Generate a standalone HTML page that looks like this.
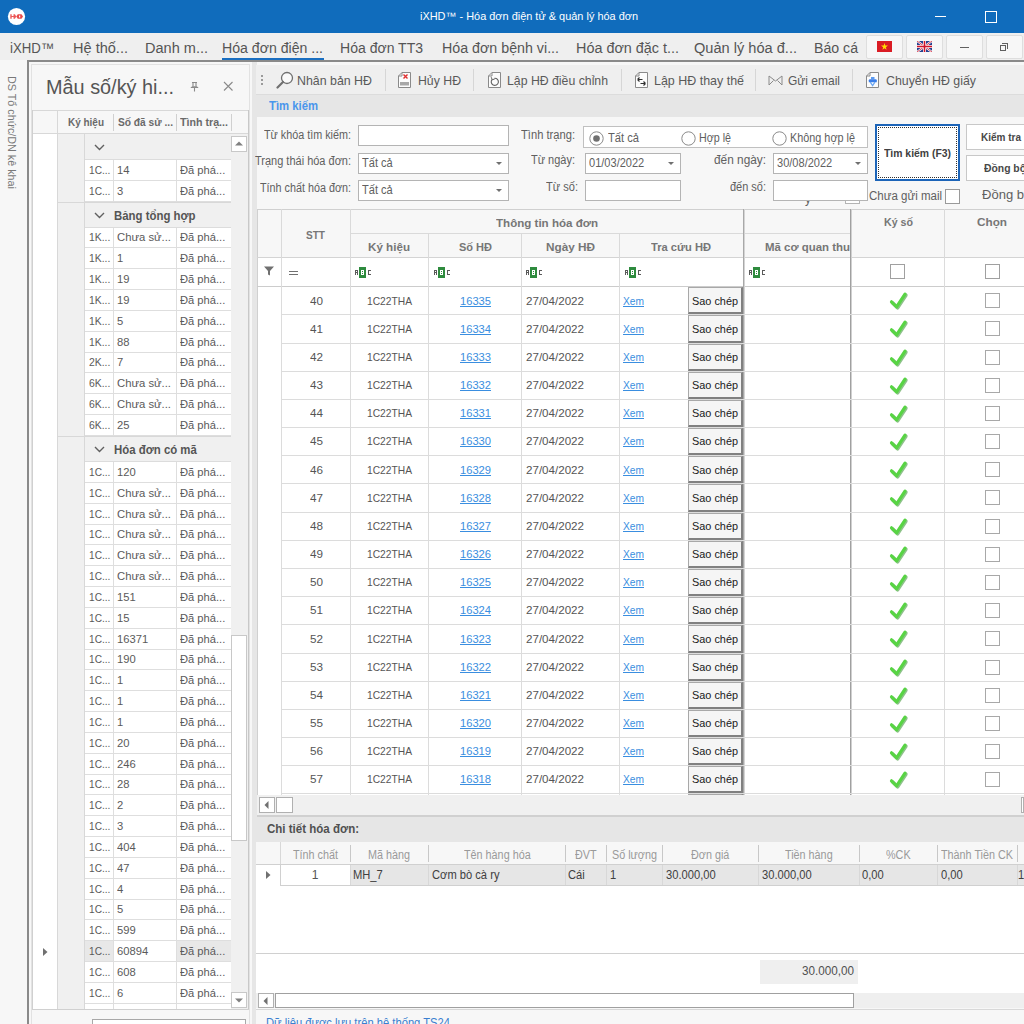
<!DOCTYPE html><html><head><meta charset="utf-8"><style>html,body{margin:0;padding:0;width:1024px;height:1024px;overflow:hidden;background:#f7f7f7;font-family:"Liberation Sans",sans-serif;}.a{position:absolute;}.t{white-space:nowrap;}</style></head><body><div class="a" style="left:0px;top:0px;width:1024px;height:33px;background:#106cbc;"></div><svg class="a" style="left:7px;top:7px" width="19" height="19"><circle cx="9.5" cy="9.5" r="8.6" fill="#fff"/><path d="M3.3,7.3H4.7V9H6.5V7.3H7.9L9.3,9.5L7.9,11.7H6.5V10H4.7V11.7H3.3Z" fill="#ec5a5a"/><path d="M9.2,9.5L10.8,7.2H14.5L16,9.5L14.5,11.8H10.8Z" fill="#ea4a4a"/><path d="M12,8.4H13.2V10.6H12Z" fill="#fff"/></svg><div class="a t" style="left:420.00px;top:10.04px;font-size:11px;line-height:12.29px;color:#ffffff;transform:scaleX(0.9942);transform-origin:0 0;">iXHD™ - Hóa đơn điện tử &amp; quản lý hóa đơn</div><div class="a" style="left:935px;top:15.5px;width:11px;height:1.5px;background:#ffffff;"></div><div class="a" style="left:985px;top:11px;width:11.5px;height:11.5px;border:1.5px solid #ffffff;box-sizing:border-box;"></div><div class="a" style="left:0px;top:33px;width:1024px;height:27px;background:#efefef;"></div><div class="a t" style="left:10.00px;top:40.53px;font-size:14px;line-height:15.64px;color:#555555;transform:scaleX(0.9428);transform-origin:0 0;">iXHD™</div><div class="a t" style="left:73.00px;top:40.53px;font-size:14px;line-height:15.64px;color:#555555;transform:scaleX(1.0394);transform-origin:0 0;">Hệ thố...</div><div class="a t" style="left:145.00px;top:40.53px;font-size:14px;line-height:15.64px;color:#555555;transform:scaleX(1.0381);transform-origin:0 0;">Danh m...</div><div class="a t" style="left:222.00px;top:40.53px;font-size:14px;line-height:15.64px;color:#555555;transform:scaleX(1.0076);transform-origin:0 0;">Hóa đơn điện ...</div><div class="a t" style="left:340.00px;top:40.53px;font-size:14px;line-height:15.64px;color:#555555;transform:scaleX(1.0019);transform-origin:0 0;">Hóa đơn TT3</div><div class="a t" style="left:442.00px;top:40.53px;font-size:14px;line-height:15.64px;color:#555555;transform:scaleX(1.0172);transform-origin:0 0;">Hóa đơn bệnh vi...</div><div class="a t" style="left:576.00px;top:40.53px;font-size:14px;line-height:15.64px;color:#555555;transform:scaleX(1.0276);transform-origin:0 0;">Hóa đơn đặc t...</div><div class="a t" style="left:694.00px;top:40.53px;font-size:14px;line-height:15.64px;color:#555555;transform:scaleX(1.0422);transform-origin:0 0;">Quản lý hóa đ...</div><div class="a t" style="left:814.00px;top:40.53px;font-size:14px;line-height:15.64px;color:#555555;transform:scaleX(1.0096);transform-origin:0 0;">Báo cá</div><div class="a" style="left:222px;top:57.6px;width:102px;height:2.6px;background:#1a6ec0;"></div><div class="a" style="left:866px;top:35px;width:37px;height:24px;background:#f7f7f7;border:1px solid #dedede;box-sizing:border-box;border-radius:2px;"></div><div class="a" style="left:906px;top:35px;width:37px;height:24px;background:#f7f7f7;border:1px solid #dedede;box-sizing:border-box;border-radius:2px;"></div><div class="a" style="left:946px;top:35px;width:37px;height:24px;background:#f7f7f7;border:1px solid #dedede;box-sizing:border-box;border-radius:2px;"></div><div class="a" style="left:986px;top:35px;width:37px;height:24px;background:#f7f7f7;border:1px solid #dedede;box-sizing:border-box;border-radius:2px;"></div><svg class="a" style="left:877px;top:41px" width="15" height="11"><rect width="15" height="11" fill="#da1c24"/><polygon points="7.5,2 8.3,4.6 11,4.6 8.8,6.2 9.6,8.8 7.5,7.2 5.4,8.8 6.2,6.2 4,4.6 6.7,4.6" fill="#ffdd00"/></svg><svg class="a" style="left:917px;top:41px" width="15" height="11"><rect width="15" height="11" fill="#25408f"/><path d="M0,0L15,11M15,0L0,11" stroke="#fff" stroke-width="2.2"/><path d="M0,0L15,11M15,0L0,11" stroke="#cf142b" stroke-width="0.8"/><rect x="6" y="0" width="3" height="11" fill="#fff"/><rect x="0" y="4" width="15" height="3" fill="#fff"/><rect x="6.7" y="0" width="1.6" height="11" fill="#cf142b"/><rect x="0" y="4.7" width="15" height="1.6" fill="#cf142b"/></svg><div class="a" style="left:960px;top:47px;width:9px;height:1px;background:#606060;"></div><div class="a" style="left:1000px;top:45px;width:6px;height:6px;border:1px solid #606060;box-sizing:border-box;"></div><div class="a" style="left:1002px;top:43px;width:6px;height:6px;border:1px solid #606060;box-sizing:border-box;border-left:none;border-bottom:none;"></div><div class="a" style="left:27px;top:60px;width:997px;height:2px;background:#8a8a8a;"></div><div class="a" style="left:0px;top:60px;width:27px;height:964px;background:#f7f7f7;"></div><div class="a t" style="left:9px;top:76px;font-size:11px;line-height:12px;color:#787878;transform-origin:0 0;transform:rotate(90deg) scaleX(0.9795);"><span style="position:relative;top:-9px">DS Tổ chức/DN kê khai</span></div><div class="a" style="left:27px;top:62px;width:2px;height:962px;background:#8a8a8a;"></div><div class="a" style="left:29px;top:62px;width:223px;height:962px;background:#f7f7f7;"></div><div class="a" style="left:31px;top:64px;width:219px;height:960px;border:1px solid #e2e2e2;box-sizing:border-box;"></div><div class="a t" style="left:46.00px;top:76.40px;font-size:20px;line-height:22.34px;color:#555555;transform:scaleX(0.9928);transform-origin:0 0;">Mẫu số/ký hi...</div><svg class="a" style="left:189px;top:81px" width="11" height="11"><path d="M3,1.5H8M4,1.5V5.5M7,1.5V5.5M1.8,6.5H9.2M5.5,6.5V10.5" stroke="#8a8a8a" stroke-width="1.1" fill="none"/><path d="M3.2,5.2L1.8,6.5H9.2L7.8,5.2Z" fill="#8a8a8a"/></svg><svg class="a" style="left:223px;top:81px" width="11" height="11"><path d="M1,1L9.5,9.5M9.5,1L1,9.5" stroke="#8a8a8a" stroke-width="1.1"/></svg><div class="a" style="left:32px;top:110px;width:217px;height:900px;background:#ffffff;"></div><div class="a" style="left:32px;top:110px;width:217px;height:24px;background:#f7f7f7;"></div><div class="a" style="left:32px;top:110px;width:217px;height:1px;background:#d8d8d8;"></div><div class="a" style="left:32px;top:133px;width:217px;height:1px;background:#d8d8d8;"></div><div class="a" style="left:32px;top:110px;width:1px;height:900px;background:#d0d0d0;"></div><div class="a" style="left:248px;top:110px;width:1px;height:900px;background:#c8c8c8;"></div><div class="a" style="left:57px;top:110px;width:1px;height:24px;background:#d8d8d8;"></div><div class="a" style="left:113px;top:114px;width:1px;height:17px;background:#d0d0d0;"></div><div class="a" style="left:176px;top:114px;width:1px;height:17px;background:#d0d0d0;"></div><div class="a" style="left:231px;top:114px;width:1px;height:17px;background:#d0d0d0;"></div><div class="a t" style="left:68.00px;top:116.05px;font-size:11px;line-height:12.29px;color:#6a6a6a;font-weight:bold;transform:scaleX(0.9062);transform-origin:0 0;">Ký hiệu</div><div class="a t" style="left:118.00px;top:116.05px;font-size:11px;line-height:12.29px;color:#6a6a6a;font-weight:bold;transform:scaleX(0.9273);transform-origin:0 0;">Số đã sử ...</div><div class="a t" style="left:180.00px;top:116.05px;font-size:11px;line-height:12.29px;color:#6a6a6a;font-weight:bold;transform:scaleX(0.9698);transform-origin:0 0;">Tình trạ...</div><div class="a" style="left:231px;top:134px;width:17px;height:875px;background:#f0f0f0;"></div><div class="a" style="left:231px;top:136px;width:16px;height:16px;background:#ffffff;border:1px solid #c8c8c8;box-sizing:border-box;"></div><svg class="a" style="left:235px;top:141px" width="8" height="5"><path d="M0,4.5L4,0.5L8,4.5Z" fill="#808080"/></svg><div class="a" style="left:231px;top:635px;width:16px;height:206px;background:#ffffff;border:1px solid #c8c8c8;box-sizing:border-box;"></div><div class="a" style="left:231px;top:992px;width:16px;height:16px;background:#ffffff;border:1px solid #c8c8c8;box-sizing:border-box;"></div><svg class="a" style="left:235px;top:998px" width="8" height="5"><path d="M0,0.5L4,4.5L8,0.5Z" fill="#808080"/></svg><div class="a" style="left:57px;top:134px;width:27px;height:875px;background:#f0f0f0;"></div><div class="a" style="left:57px;top:134px;width:174px;height:26px;background:#f0f0f0;"></div><div class="a" style="left:84px;top:159px;width:147px;height:1px;background:#dcdcdc;"></div><svg class="a" style="left:94px;top:144px" width="11" height="7"><path d="M1,1L5.5,5.5L10,1" stroke="#606060" stroke-width="1.4" fill="none"/></svg><div class="a" style="left:84px;top:160px;width:147px;height:21px;background:#ffffff;"></div><div class="a" style="left:84px;top:180px;width:147px;height:1px;background:#dedede;"></div><div class="a" style="left:113px;top:160px;width:1px;height:21px;background:#dedede;"></div><div class="a" style="left:176px;top:160px;width:1px;height:21px;background:#dedede;"></div><div class="a t" style="left:89.00px;top:163.76px;font-size:11px;line-height:12.29px;color:#5a5a5a;transform:scaleX(0.9213);transform-origin:0 0;">1C...</div><div class="a t" style="left:117.00px;top:163.76px;font-size:11px;line-height:12.29px;color:#5a5a5a;transform:scaleX(1.0200);transform-origin:0 0;">14</div><div class="a t" style="left:180.00px;top:163.76px;font-size:11px;line-height:12.29px;color:#5a5a5a;transform:scaleX(1.0149);transform-origin:0 0;">Đã phá...</div><div class="a" style="left:84px;top:181px;width:147px;height:21px;background:#ffffff;"></div><div class="a" style="left:84px;top:201px;width:147px;height:1px;background:#dedede;"></div><div class="a" style="left:113px;top:181px;width:1px;height:21px;background:#dedede;"></div><div class="a" style="left:176px;top:181px;width:1px;height:21px;background:#dedede;"></div><div class="a t" style="left:89.00px;top:184.59px;font-size:11px;line-height:12.29px;color:#5a5a5a;transform:scaleX(0.9213);transform-origin:0 0;">1C...</div><div class="a t" style="left:117.00px;top:184.59px;font-size:11px;line-height:12.29px;color:#5a5a5a;transform:scaleX(1.0200);transform-origin:0 0;">3</div><div class="a t" style="left:180.00px;top:184.59px;font-size:11px;line-height:12.29px;color:#5a5a5a;transform:scaleX(1.0149);transform-origin:0 0;">Đã phá...</div><div class="a" style="left:57px;top:202px;width:174px;height:26px;background:#f0f0f0;"></div><div class="a" style="left:57px;top:202px;width:174px;height:1px;background:#d8d8d8;"></div><div class="a" style="left:84px;top:227px;width:147px;height:1px;background:#dcdcdc;"></div><svg class="a" style="left:94px;top:212px" width="11" height="7"><path d="M1,1L5.5,5.5L10,1" stroke="#606060" stroke-width="1.4" fill="none"/></svg><div class="a t" style="left:114.00px;top:210.10px;font-size:12px;line-height:13.40px;color:#555555;font-weight:bold;transform:scaleX(0.9500);transform-origin:0 0;">Bảng tổng hợp</div><div class="a" style="left:84px;top:228px;width:147px;height:20px;background:#ffffff;"></div><div class="a" style="left:84px;top:247px;width:147px;height:1px;background:#dedede;"></div><div class="a" style="left:113px;top:228px;width:1px;height:20px;background:#dedede;"></div><div class="a" style="left:176px;top:228px;width:1px;height:20px;background:#dedede;"></div><div class="a t" style="left:89.00px;top:231.42px;font-size:11px;line-height:12.29px;color:#5a5a5a;transform:scaleX(0.9460);transform-origin:0 0;">1K...</div><div class="a t" style="left:117.00px;top:231.42px;font-size:11px;line-height:12.29px;color:#5a5a5a;transform:scaleX(1.0261);transform-origin:0 0;">Chưa sử...</div><div class="a t" style="left:180.00px;top:231.42px;font-size:11px;line-height:12.29px;color:#5a5a5a;transform:scaleX(1.0149);transform-origin:0 0;">Đã phá...</div><div class="a" style="left:84px;top:248px;width:147px;height:21px;background:#ffffff;"></div><div class="a" style="left:84px;top:268px;width:147px;height:1px;background:#dedede;"></div><div class="a" style="left:113px;top:248px;width:1px;height:21px;background:#dedede;"></div><div class="a" style="left:176px;top:248px;width:1px;height:21px;background:#dedede;"></div><div class="a t" style="left:89.00px;top:252.25px;font-size:11px;line-height:12.29px;color:#5a5a5a;transform:scaleX(0.9460);transform-origin:0 0;">1K...</div><div class="a t" style="left:117.00px;top:252.25px;font-size:11px;line-height:12.29px;color:#5a5a5a;transform:scaleX(1.0200);transform-origin:0 0;">1</div><div class="a t" style="left:180.00px;top:252.25px;font-size:11px;line-height:12.29px;color:#5a5a5a;transform:scaleX(1.0149);transform-origin:0 0;">Đã phá...</div><div class="a" style="left:84px;top:269px;width:147px;height:21px;background:#ffffff;"></div><div class="a" style="left:84px;top:289px;width:147px;height:1px;background:#dedede;"></div><div class="a" style="left:113px;top:269px;width:1px;height:21px;background:#dedede;"></div><div class="a" style="left:176px;top:269px;width:1px;height:21px;background:#dedede;"></div><div class="a t" style="left:89.00px;top:273.08px;font-size:11px;line-height:12.29px;color:#5a5a5a;transform:scaleX(0.9460);transform-origin:0 0;">1K...</div><div class="a t" style="left:117.00px;top:273.08px;font-size:11px;line-height:12.29px;color:#5a5a5a;transform:scaleX(1.0200);transform-origin:0 0;">19</div><div class="a t" style="left:180.00px;top:273.08px;font-size:11px;line-height:12.29px;color:#5a5a5a;transform:scaleX(1.0149);transform-origin:0 0;">Đã phá...</div><div class="a" style="left:84px;top:290px;width:147px;height:21px;background:#ffffff;"></div><div class="a" style="left:84px;top:310px;width:147px;height:1px;background:#dedede;"></div><div class="a" style="left:113px;top:290px;width:1px;height:21px;background:#dedede;"></div><div class="a" style="left:176px;top:290px;width:1px;height:21px;background:#dedede;"></div><div class="a t" style="left:89.00px;top:293.91px;font-size:11px;line-height:12.29px;color:#5a5a5a;transform:scaleX(0.9460);transform-origin:0 0;">1K...</div><div class="a t" style="left:117.00px;top:293.91px;font-size:11px;line-height:12.29px;color:#5a5a5a;transform:scaleX(1.0200);transform-origin:0 0;">19</div><div class="a t" style="left:180.00px;top:293.91px;font-size:11px;line-height:12.29px;color:#5a5a5a;transform:scaleX(1.0149);transform-origin:0 0;">Đã phá...</div><div class="a" style="left:84px;top:311px;width:147px;height:21px;background:#ffffff;"></div><div class="a" style="left:84px;top:331px;width:147px;height:1px;background:#dedede;"></div><div class="a" style="left:113px;top:311px;width:1px;height:21px;background:#dedede;"></div><div class="a" style="left:176px;top:311px;width:1px;height:21px;background:#dedede;"></div><div class="a t" style="left:89.00px;top:314.74px;font-size:11px;line-height:12.29px;color:#5a5a5a;transform:scaleX(0.9460);transform-origin:0 0;">1K...</div><div class="a t" style="left:117.00px;top:314.74px;font-size:11px;line-height:12.29px;color:#5a5a5a;transform:scaleX(1.0200);transform-origin:0 0;">5</div><div class="a t" style="left:180.00px;top:314.74px;font-size:11px;line-height:12.29px;color:#5a5a5a;transform:scaleX(1.0149);transform-origin:0 0;">Đã phá...</div><div class="a" style="left:84px;top:332px;width:147px;height:21px;background:#ffffff;"></div><div class="a" style="left:84px;top:352px;width:147px;height:1px;background:#dedede;"></div><div class="a" style="left:113px;top:332px;width:1px;height:21px;background:#dedede;"></div><div class="a" style="left:176px;top:332px;width:1px;height:21px;background:#dedede;"></div><div class="a t" style="left:89.00px;top:335.57px;font-size:11px;line-height:12.29px;color:#5a5a5a;transform:scaleX(0.9460);transform-origin:0 0;">1K...</div><div class="a t" style="left:117.00px;top:335.57px;font-size:11px;line-height:12.29px;color:#5a5a5a;transform:scaleX(1.0200);transform-origin:0 0;">88</div><div class="a t" style="left:180.00px;top:335.57px;font-size:11px;line-height:12.29px;color:#5a5a5a;transform:scaleX(1.0149);transform-origin:0 0;">Đã phá...</div><div class="a" style="left:84px;top:353px;width:147px;height:20px;background:#ffffff;"></div><div class="a" style="left:84px;top:372px;width:147px;height:1px;background:#dedede;"></div><div class="a" style="left:113px;top:353px;width:1px;height:20px;background:#dedede;"></div><div class="a" style="left:176px;top:353px;width:1px;height:20px;background:#dedede;"></div><div class="a t" style="left:89.00px;top:356.40px;font-size:11px;line-height:12.29px;color:#5a5a5a;transform:scaleX(0.9460);transform-origin:0 0;">2K...</div><div class="a t" style="left:117.00px;top:356.40px;font-size:11px;line-height:12.29px;color:#5a5a5a;transform:scaleX(1.0200);transform-origin:0 0;">7</div><div class="a t" style="left:180.00px;top:356.40px;font-size:11px;line-height:12.29px;color:#5a5a5a;transform:scaleX(1.0149);transform-origin:0 0;">Đã phá...</div><div class="a" style="left:84px;top:373px;width:147px;height:21px;background:#ffffff;"></div><div class="a" style="left:84px;top:393px;width:147px;height:1px;background:#dedede;"></div><div class="a" style="left:113px;top:373px;width:1px;height:21px;background:#dedede;"></div><div class="a" style="left:176px;top:373px;width:1px;height:21px;background:#dedede;"></div><div class="a t" style="left:89.00px;top:377.23px;font-size:11px;line-height:12.29px;color:#5a5a5a;transform:scaleX(0.9460);transform-origin:0 0;">6K...</div><div class="a t" style="left:117.00px;top:377.23px;font-size:11px;line-height:12.29px;color:#5a5a5a;transform:scaleX(1.0261);transform-origin:0 0;">Chưa sử...</div><div class="a t" style="left:180.00px;top:377.23px;font-size:11px;line-height:12.29px;color:#5a5a5a;transform:scaleX(1.0149);transform-origin:0 0;">Đã phá...</div><div class="a" style="left:84px;top:394px;width:147px;height:21px;background:#ffffff;"></div><div class="a" style="left:84px;top:414px;width:147px;height:1px;background:#dedede;"></div><div class="a" style="left:113px;top:394px;width:1px;height:21px;background:#dedede;"></div><div class="a" style="left:176px;top:394px;width:1px;height:21px;background:#dedede;"></div><div class="a t" style="left:89.00px;top:398.06px;font-size:11px;line-height:12.29px;color:#5a5a5a;transform:scaleX(0.9460);transform-origin:0 0;">6K...</div><div class="a t" style="left:117.00px;top:398.06px;font-size:11px;line-height:12.29px;color:#5a5a5a;transform:scaleX(1.0261);transform-origin:0 0;">Chưa sử...</div><div class="a t" style="left:180.00px;top:398.06px;font-size:11px;line-height:12.29px;color:#5a5a5a;transform:scaleX(1.0149);transform-origin:0 0;">Đã phá...</div><div class="a" style="left:84px;top:415px;width:147px;height:21px;background:#ffffff;"></div><div class="a" style="left:84px;top:435px;width:147px;height:1px;background:#dedede;"></div><div class="a" style="left:113px;top:415px;width:1px;height:21px;background:#dedede;"></div><div class="a" style="left:176px;top:415px;width:1px;height:21px;background:#dedede;"></div><div class="a t" style="left:89.00px;top:418.89px;font-size:11px;line-height:12.29px;color:#5a5a5a;transform:scaleX(0.9460);transform-origin:0 0;">6K...</div><div class="a t" style="left:117.00px;top:418.89px;font-size:11px;line-height:12.29px;color:#5a5a5a;transform:scaleX(1.0200);transform-origin:0 0;">25</div><div class="a t" style="left:180.00px;top:418.89px;font-size:11px;line-height:12.29px;color:#5a5a5a;transform:scaleX(1.0149);transform-origin:0 0;">Đã phá...</div><div class="a" style="left:57px;top:436px;width:174px;height:26px;background:#f0f0f0;"></div><div class="a" style="left:57px;top:436px;width:174px;height:1px;background:#d8d8d8;"></div><div class="a" style="left:84px;top:461px;width:147px;height:1px;background:#dcdcdc;"></div><svg class="a" style="left:94px;top:446px" width="11" height="7"><path d="M1,1L5.5,5.5L10,1" stroke="#606060" stroke-width="1.4" fill="none"/></svg><div class="a t" style="left:114.00px;top:444.40px;font-size:12px;line-height:13.40px;color:#555555;font-weight:bold;transform:scaleX(0.9500);transform-origin:0 0;">Hóa đơn có mã</div><div class="a" style="left:84px;top:462px;width:147px;height:21px;background:#ffffff;"></div><div class="a" style="left:84px;top:482px;width:147px;height:1px;background:#dedede;"></div><div class="a" style="left:113px;top:462px;width:1px;height:21px;background:#dedede;"></div><div class="a" style="left:176px;top:462px;width:1px;height:21px;background:#dedede;"></div><div class="a t" style="left:89.00px;top:465.92px;font-size:11px;line-height:12.29px;color:#5a5a5a;transform:scaleX(0.9213);transform-origin:0 0;">1C...</div><div class="a t" style="left:117.00px;top:465.92px;font-size:11px;line-height:12.29px;color:#5a5a5a;transform:scaleX(1.0200);transform-origin:0 0;">120</div><div class="a t" style="left:180.00px;top:465.92px;font-size:11px;line-height:12.29px;color:#5a5a5a;transform:scaleX(1.0149);transform-origin:0 0;">Đã phá...</div><div class="a" style="left:84px;top:483px;width:147px;height:21px;background:#ffffff;"></div><div class="a" style="left:84px;top:503px;width:147px;height:1px;background:#dedede;"></div><div class="a" style="left:113px;top:483px;width:1px;height:21px;background:#dedede;"></div><div class="a" style="left:176px;top:483px;width:1px;height:21px;background:#dedede;"></div><div class="a t" style="left:89.00px;top:486.75px;font-size:11px;line-height:12.29px;color:#5a5a5a;transform:scaleX(0.9213);transform-origin:0 0;">1C...</div><div class="a t" style="left:117.00px;top:486.75px;font-size:11px;line-height:12.29px;color:#5a5a5a;transform:scaleX(1.0261);transform-origin:0 0;">Chưa sử...</div><div class="a t" style="left:180.00px;top:486.75px;font-size:11px;line-height:12.29px;color:#5a5a5a;transform:scaleX(1.0149);transform-origin:0 0;">Đã phá...</div><div class="a" style="left:84px;top:504px;width:147px;height:21px;background:#ffffff;"></div><div class="a" style="left:84px;top:524px;width:147px;height:1px;background:#dedede;"></div><div class="a" style="left:113px;top:504px;width:1px;height:21px;background:#dedede;"></div><div class="a" style="left:176px;top:504px;width:1px;height:21px;background:#dedede;"></div><div class="a t" style="left:89.00px;top:507.58px;font-size:11px;line-height:12.29px;color:#5a5a5a;transform:scaleX(0.9213);transform-origin:0 0;">1C...</div><div class="a t" style="left:117.00px;top:507.58px;font-size:11px;line-height:12.29px;color:#5a5a5a;transform:scaleX(1.0261);transform-origin:0 0;">Chưa sử...</div><div class="a t" style="left:180.00px;top:507.58px;font-size:11px;line-height:12.29px;color:#5a5a5a;transform:scaleX(1.0149);transform-origin:0 0;">Đã phá...</div><div class="a" style="left:84px;top:525px;width:147px;height:20px;background:#ffffff;"></div><div class="a" style="left:84px;top:544px;width:147px;height:1px;background:#dedede;"></div><div class="a" style="left:113px;top:525px;width:1px;height:20px;background:#dedede;"></div><div class="a" style="left:176px;top:525px;width:1px;height:20px;background:#dedede;"></div><div class="a t" style="left:89.00px;top:528.41px;font-size:11px;line-height:12.29px;color:#5a5a5a;transform:scaleX(0.9213);transform-origin:0 0;">1C...</div><div class="a t" style="left:117.00px;top:528.41px;font-size:11px;line-height:12.29px;color:#5a5a5a;transform:scaleX(1.0261);transform-origin:0 0;">Chưa sử...</div><div class="a t" style="left:180.00px;top:528.41px;font-size:11px;line-height:12.29px;color:#5a5a5a;transform:scaleX(1.0149);transform-origin:0 0;">Đã phá...</div><div class="a" style="left:84px;top:545px;width:147px;height:21px;background:#ffffff;"></div><div class="a" style="left:84px;top:565px;width:147px;height:1px;background:#dedede;"></div><div class="a" style="left:113px;top:545px;width:1px;height:21px;background:#dedede;"></div><div class="a" style="left:176px;top:545px;width:1px;height:21px;background:#dedede;"></div><div class="a t" style="left:89.00px;top:549.24px;font-size:11px;line-height:12.29px;color:#5a5a5a;transform:scaleX(0.9213);transform-origin:0 0;">1C...</div><div class="a t" style="left:117.00px;top:549.24px;font-size:11px;line-height:12.29px;color:#5a5a5a;transform:scaleX(1.0261);transform-origin:0 0;">Chưa sử...</div><div class="a t" style="left:180.00px;top:549.24px;font-size:11px;line-height:12.29px;color:#5a5a5a;transform:scaleX(1.0149);transform-origin:0 0;">Đã phá...</div><div class="a" style="left:84px;top:566px;width:147px;height:21px;background:#ffffff;"></div><div class="a" style="left:84px;top:586px;width:147px;height:1px;background:#dedede;"></div><div class="a" style="left:113px;top:566px;width:1px;height:21px;background:#dedede;"></div><div class="a" style="left:176px;top:566px;width:1px;height:21px;background:#dedede;"></div><div class="a t" style="left:89.00px;top:570.07px;font-size:11px;line-height:12.29px;color:#5a5a5a;transform:scaleX(0.9213);transform-origin:0 0;">1C...</div><div class="a t" style="left:117.00px;top:570.07px;font-size:11px;line-height:12.29px;color:#5a5a5a;transform:scaleX(1.0261);transform-origin:0 0;">Chưa sử...</div><div class="a t" style="left:180.00px;top:570.07px;font-size:11px;line-height:12.29px;color:#5a5a5a;transform:scaleX(1.0149);transform-origin:0 0;">Đã phá...</div><div class="a" style="left:84px;top:587px;width:147px;height:21px;background:#ffffff;"></div><div class="a" style="left:84px;top:607px;width:147px;height:1px;background:#dedede;"></div><div class="a" style="left:113px;top:587px;width:1px;height:21px;background:#dedede;"></div><div class="a" style="left:176px;top:587px;width:1px;height:21px;background:#dedede;"></div><div class="a t" style="left:89.00px;top:590.90px;font-size:11px;line-height:12.29px;color:#5a5a5a;transform:scaleX(0.9213);transform-origin:0 0;">1C...</div><div class="a t" style="left:117.00px;top:590.90px;font-size:11px;line-height:12.29px;color:#5a5a5a;transform:scaleX(1.0200);transform-origin:0 0;">151</div><div class="a t" style="left:180.00px;top:590.90px;font-size:11px;line-height:12.29px;color:#5a5a5a;transform:scaleX(1.0149);transform-origin:0 0;">Đã phá...</div><div class="a" style="left:84px;top:608px;width:147px;height:21px;background:#ffffff;"></div><div class="a" style="left:84px;top:628px;width:147px;height:1px;background:#dedede;"></div><div class="a" style="left:113px;top:608px;width:1px;height:21px;background:#dedede;"></div><div class="a" style="left:176px;top:608px;width:1px;height:21px;background:#dedede;"></div><div class="a t" style="left:89.00px;top:611.73px;font-size:11px;line-height:12.29px;color:#5a5a5a;transform:scaleX(0.9213);transform-origin:0 0;">1C...</div><div class="a t" style="left:117.00px;top:611.73px;font-size:11px;line-height:12.29px;color:#5a5a5a;transform:scaleX(1.0200);transform-origin:0 0;">15</div><div class="a t" style="left:180.00px;top:611.73px;font-size:11px;line-height:12.29px;color:#5a5a5a;transform:scaleX(1.0149);transform-origin:0 0;">Đã phá...</div><div class="a" style="left:84px;top:629px;width:147px;height:21px;background:#ffffff;"></div><div class="a" style="left:84px;top:649px;width:147px;height:1px;background:#dedede;"></div><div class="a" style="left:113px;top:629px;width:1px;height:21px;background:#dedede;"></div><div class="a" style="left:176px;top:629px;width:1px;height:21px;background:#dedede;"></div><div class="a t" style="left:89.00px;top:632.56px;font-size:11px;line-height:12.29px;color:#5a5a5a;transform:scaleX(0.9213);transform-origin:0 0;">1C...</div><div class="a t" style="left:117.00px;top:632.56px;font-size:11px;line-height:12.29px;color:#5a5a5a;transform:scaleX(1.0200);transform-origin:0 0;">16371</div><div class="a t" style="left:180.00px;top:632.56px;font-size:11px;line-height:12.29px;color:#5a5a5a;transform:scaleX(1.0149);transform-origin:0 0;">Đã phá...</div><div class="a" style="left:84px;top:650px;width:147px;height:20px;background:#ffffff;"></div><div class="a" style="left:84px;top:669px;width:147px;height:1px;background:#dedede;"></div><div class="a" style="left:113px;top:650px;width:1px;height:20px;background:#dedede;"></div><div class="a" style="left:176px;top:650px;width:1px;height:20px;background:#dedede;"></div><div class="a t" style="left:89.00px;top:653.39px;font-size:11px;line-height:12.29px;color:#5a5a5a;transform:scaleX(0.9213);transform-origin:0 0;">1C...</div><div class="a t" style="left:117.00px;top:653.39px;font-size:11px;line-height:12.29px;color:#5a5a5a;transform:scaleX(1.0200);transform-origin:0 0;">190</div><div class="a t" style="left:180.00px;top:653.39px;font-size:11px;line-height:12.29px;color:#5a5a5a;transform:scaleX(1.0149);transform-origin:0 0;">Đã phá...</div><div class="a" style="left:84px;top:670px;width:147px;height:21px;background:#ffffff;"></div><div class="a" style="left:84px;top:690px;width:147px;height:1px;background:#dedede;"></div><div class="a" style="left:113px;top:670px;width:1px;height:21px;background:#dedede;"></div><div class="a" style="left:176px;top:670px;width:1px;height:21px;background:#dedede;"></div><div class="a t" style="left:89.00px;top:674.22px;font-size:11px;line-height:12.29px;color:#5a5a5a;transform:scaleX(0.9213);transform-origin:0 0;">1C...</div><div class="a t" style="left:117.00px;top:674.22px;font-size:11px;line-height:12.29px;color:#5a5a5a;transform:scaleX(1.0200);transform-origin:0 0;">1</div><div class="a t" style="left:180.00px;top:674.22px;font-size:11px;line-height:12.29px;color:#5a5a5a;transform:scaleX(1.0149);transform-origin:0 0;">Đã phá...</div><div class="a" style="left:84px;top:691px;width:147px;height:21px;background:#ffffff;"></div><div class="a" style="left:84px;top:711px;width:147px;height:1px;background:#dedede;"></div><div class="a" style="left:113px;top:691px;width:1px;height:21px;background:#dedede;"></div><div class="a" style="left:176px;top:691px;width:1px;height:21px;background:#dedede;"></div><div class="a t" style="left:89.00px;top:695.05px;font-size:11px;line-height:12.29px;color:#5a5a5a;transform:scaleX(0.9213);transform-origin:0 0;">1C...</div><div class="a t" style="left:117.00px;top:695.05px;font-size:11px;line-height:12.29px;color:#5a5a5a;transform:scaleX(1.0200);transform-origin:0 0;">1</div><div class="a t" style="left:180.00px;top:695.05px;font-size:11px;line-height:12.29px;color:#5a5a5a;transform:scaleX(1.0149);transform-origin:0 0;">Đã phá...</div><div class="a" style="left:84px;top:712px;width:147px;height:21px;background:#ffffff;"></div><div class="a" style="left:84px;top:732px;width:147px;height:1px;background:#dedede;"></div><div class="a" style="left:113px;top:712px;width:1px;height:21px;background:#dedede;"></div><div class="a" style="left:176px;top:712px;width:1px;height:21px;background:#dedede;"></div><div class="a t" style="left:89.00px;top:715.88px;font-size:11px;line-height:12.29px;color:#5a5a5a;transform:scaleX(0.9213);transform-origin:0 0;">1C...</div><div class="a t" style="left:117.00px;top:715.88px;font-size:11px;line-height:12.29px;color:#5a5a5a;transform:scaleX(1.0200);transform-origin:0 0;">1</div><div class="a t" style="left:180.00px;top:715.88px;font-size:11px;line-height:12.29px;color:#5a5a5a;transform:scaleX(1.0149);transform-origin:0 0;">Đã phá...</div><div class="a" style="left:84px;top:733px;width:147px;height:21px;background:#ffffff;"></div><div class="a" style="left:84px;top:753px;width:147px;height:1px;background:#dedede;"></div><div class="a" style="left:113px;top:733px;width:1px;height:21px;background:#dedede;"></div><div class="a" style="left:176px;top:733px;width:1px;height:21px;background:#dedede;"></div><div class="a t" style="left:89.00px;top:736.71px;font-size:11px;line-height:12.29px;color:#5a5a5a;transform:scaleX(0.9213);transform-origin:0 0;">1C...</div><div class="a t" style="left:117.00px;top:736.71px;font-size:11px;line-height:12.29px;color:#5a5a5a;transform:scaleX(1.0200);transform-origin:0 0;">20</div><div class="a t" style="left:180.00px;top:736.71px;font-size:11px;line-height:12.29px;color:#5a5a5a;transform:scaleX(1.0149);transform-origin:0 0;">Đã phá...</div><div class="a" style="left:84px;top:754px;width:147px;height:21px;background:#ffffff;"></div><div class="a" style="left:84px;top:774px;width:147px;height:1px;background:#dedede;"></div><div class="a" style="left:113px;top:754px;width:1px;height:21px;background:#dedede;"></div><div class="a" style="left:176px;top:754px;width:1px;height:21px;background:#dedede;"></div><div class="a t" style="left:89.00px;top:757.54px;font-size:11px;line-height:12.29px;color:#5a5a5a;transform:scaleX(0.9213);transform-origin:0 0;">1C...</div><div class="a t" style="left:117.00px;top:757.54px;font-size:11px;line-height:12.29px;color:#5a5a5a;transform:scaleX(1.0200);transform-origin:0 0;">246</div><div class="a t" style="left:180.00px;top:757.54px;font-size:11px;line-height:12.29px;color:#5a5a5a;transform:scaleX(1.0149);transform-origin:0 0;">Đã phá...</div><div class="a" style="left:84px;top:775px;width:147px;height:20px;background:#ffffff;"></div><div class="a" style="left:84px;top:794px;width:147px;height:1px;background:#dedede;"></div><div class="a" style="left:113px;top:775px;width:1px;height:20px;background:#dedede;"></div><div class="a" style="left:176px;top:775px;width:1px;height:20px;background:#dedede;"></div><div class="a t" style="left:89.00px;top:778.37px;font-size:11px;line-height:12.29px;color:#5a5a5a;transform:scaleX(0.9213);transform-origin:0 0;">1C...</div><div class="a t" style="left:117.00px;top:778.37px;font-size:11px;line-height:12.29px;color:#5a5a5a;transform:scaleX(1.0200);transform-origin:0 0;">28</div><div class="a t" style="left:180.00px;top:778.37px;font-size:11px;line-height:12.29px;color:#5a5a5a;transform:scaleX(1.0149);transform-origin:0 0;">Đã phá...</div><div class="a" style="left:84px;top:795px;width:147px;height:21px;background:#ffffff;"></div><div class="a" style="left:84px;top:815px;width:147px;height:1px;background:#dedede;"></div><div class="a" style="left:113px;top:795px;width:1px;height:21px;background:#dedede;"></div><div class="a" style="left:176px;top:795px;width:1px;height:21px;background:#dedede;"></div><div class="a t" style="left:89.00px;top:799.20px;font-size:11px;line-height:12.29px;color:#5a5a5a;transform:scaleX(0.9213);transform-origin:0 0;">1C...</div><div class="a t" style="left:117.00px;top:799.20px;font-size:11px;line-height:12.29px;color:#5a5a5a;transform:scaleX(1.0200);transform-origin:0 0;">2</div><div class="a t" style="left:180.00px;top:799.20px;font-size:11px;line-height:12.29px;color:#5a5a5a;transform:scaleX(1.0149);transform-origin:0 0;">Đã phá...</div><div class="a" style="left:84px;top:816px;width:147px;height:21px;background:#ffffff;"></div><div class="a" style="left:84px;top:836px;width:147px;height:1px;background:#dedede;"></div><div class="a" style="left:113px;top:816px;width:1px;height:21px;background:#dedede;"></div><div class="a" style="left:176px;top:816px;width:1px;height:21px;background:#dedede;"></div><div class="a t" style="left:89.00px;top:820.03px;font-size:11px;line-height:12.29px;color:#5a5a5a;transform:scaleX(0.9213);transform-origin:0 0;">1C...</div><div class="a t" style="left:117.00px;top:820.03px;font-size:11px;line-height:12.29px;color:#5a5a5a;transform:scaleX(1.0200);transform-origin:0 0;">3</div><div class="a t" style="left:180.00px;top:820.03px;font-size:11px;line-height:12.29px;color:#5a5a5a;transform:scaleX(1.0149);transform-origin:0 0;">Đã phá...</div><div class="a" style="left:84px;top:837px;width:147px;height:21px;background:#ffffff;"></div><div class="a" style="left:84px;top:857px;width:147px;height:1px;background:#dedede;"></div><div class="a" style="left:113px;top:837px;width:1px;height:21px;background:#dedede;"></div><div class="a" style="left:176px;top:837px;width:1px;height:21px;background:#dedede;"></div><div class="a t" style="left:89.00px;top:840.86px;font-size:11px;line-height:12.29px;color:#5a5a5a;transform:scaleX(0.9213);transform-origin:0 0;">1C...</div><div class="a t" style="left:117.00px;top:840.86px;font-size:11px;line-height:12.29px;color:#5a5a5a;transform:scaleX(1.0200);transform-origin:0 0;">404</div><div class="a t" style="left:180.00px;top:840.86px;font-size:11px;line-height:12.29px;color:#5a5a5a;transform:scaleX(1.0149);transform-origin:0 0;">Đã phá...</div><div class="a" style="left:84px;top:858px;width:147px;height:21px;background:#ffffff;"></div><div class="a" style="left:84px;top:878px;width:147px;height:1px;background:#dedede;"></div><div class="a" style="left:113px;top:858px;width:1px;height:21px;background:#dedede;"></div><div class="a" style="left:176px;top:858px;width:1px;height:21px;background:#dedede;"></div><div class="a t" style="left:89.00px;top:861.69px;font-size:11px;line-height:12.29px;color:#5a5a5a;transform:scaleX(0.9213);transform-origin:0 0;">1C...</div><div class="a t" style="left:117.00px;top:861.69px;font-size:11px;line-height:12.29px;color:#5a5a5a;transform:scaleX(1.0200);transform-origin:0 0;">47</div><div class="a t" style="left:180.00px;top:861.69px;font-size:11px;line-height:12.29px;color:#5a5a5a;transform:scaleX(1.0149);transform-origin:0 0;">Đã phá...</div><div class="a" style="left:84px;top:879px;width:147px;height:21px;background:#ffffff;"></div><div class="a" style="left:84px;top:899px;width:147px;height:1px;background:#dedede;"></div><div class="a" style="left:113px;top:879px;width:1px;height:21px;background:#dedede;"></div><div class="a" style="left:176px;top:879px;width:1px;height:21px;background:#dedede;"></div><div class="a t" style="left:89.00px;top:882.52px;font-size:11px;line-height:12.29px;color:#5a5a5a;transform:scaleX(0.9213);transform-origin:0 0;">1C...</div><div class="a t" style="left:117.00px;top:882.52px;font-size:11px;line-height:12.29px;color:#5a5a5a;transform:scaleX(1.0200);transform-origin:0 0;">4</div><div class="a t" style="left:180.00px;top:882.52px;font-size:11px;line-height:12.29px;color:#5a5a5a;transform:scaleX(1.0149);transform-origin:0 0;">Đã phá...</div><div class="a" style="left:84px;top:900px;width:147px;height:20px;background:#ffffff;"></div><div class="a" style="left:84px;top:919px;width:147px;height:1px;background:#dedede;"></div><div class="a" style="left:113px;top:900px;width:1px;height:20px;background:#dedede;"></div><div class="a" style="left:176px;top:900px;width:1px;height:20px;background:#dedede;"></div><div class="a t" style="left:89.00px;top:903.35px;font-size:11px;line-height:12.29px;color:#5a5a5a;transform:scaleX(0.9213);transform-origin:0 0;">1C...</div><div class="a t" style="left:117.00px;top:903.35px;font-size:11px;line-height:12.29px;color:#5a5a5a;transform:scaleX(1.0200);transform-origin:0 0;">5</div><div class="a t" style="left:180.00px;top:903.35px;font-size:11px;line-height:12.29px;color:#5a5a5a;transform:scaleX(1.0149);transform-origin:0 0;">Đã phá...</div><div class="a" style="left:84px;top:920px;width:147px;height:21px;background:#ffffff;"></div><div class="a" style="left:84px;top:940px;width:147px;height:1px;background:#dedede;"></div><div class="a" style="left:113px;top:920px;width:1px;height:21px;background:#dedede;"></div><div class="a" style="left:176px;top:920px;width:1px;height:21px;background:#dedede;"></div><div class="a t" style="left:89.00px;top:924.18px;font-size:11px;line-height:12.29px;color:#5a5a5a;transform:scaleX(0.9213);transform-origin:0 0;">1C...</div><div class="a t" style="left:117.00px;top:924.18px;font-size:11px;line-height:12.29px;color:#5a5a5a;transform:scaleX(1.0200);transform-origin:0 0;">599</div><div class="a t" style="left:180.00px;top:924.18px;font-size:11px;line-height:12.29px;color:#5a5a5a;transform:scaleX(1.0149);transform-origin:0 0;">Đã phá...</div><div class="a" style="left:84px;top:941px;width:147px;height:21px;background:#ffffff;"></div><div class="a" style="left:84px;top:941px;width:29px;height:21px;background:#e8e8e8;"></div><div class="a" style="left:177px;top:941px;width:54px;height:21px;background:#e8e8e8;"></div><div class="a" style="left:84px;top:961px;width:147px;height:1px;background:#dedede;"></div><div class="a" style="left:113px;top:941px;width:1px;height:21px;background:#dedede;"></div><div class="a" style="left:176px;top:941px;width:1px;height:21px;background:#dedede;"></div><div class="a t" style="left:89.00px;top:945.01px;font-size:11px;line-height:12.29px;color:#5a5a5a;transform:scaleX(0.9213);transform-origin:0 0;">1C...</div><div class="a t" style="left:117.00px;top:945.01px;font-size:11px;line-height:12.29px;color:#5a5a5a;transform:scaleX(1.0200);transform-origin:0 0;">60894</div><div class="a t" style="left:180.00px;top:945.01px;font-size:11px;line-height:12.29px;color:#5a5a5a;transform:scaleX(1.0149);transform-origin:0 0;">Đã phá...</div><svg class="a" style="left:43px;top:948px" width="5" height="8"><path d="M0,0L4.5,4L0,8Z" fill="#707070"/></svg><div class="a" style="left:84px;top:962px;width:147px;height:21px;background:#ffffff;"></div><div class="a" style="left:84px;top:982px;width:147px;height:1px;background:#dedede;"></div><div class="a" style="left:113px;top:962px;width:1px;height:21px;background:#dedede;"></div><div class="a" style="left:176px;top:962px;width:1px;height:21px;background:#dedede;"></div><div class="a t" style="left:89.00px;top:965.84px;font-size:11px;line-height:12.29px;color:#5a5a5a;transform:scaleX(0.9213);transform-origin:0 0;">1C...</div><div class="a t" style="left:117.00px;top:965.84px;font-size:11px;line-height:12.29px;color:#5a5a5a;transform:scaleX(1.0200);transform-origin:0 0;">608</div><div class="a t" style="left:180.00px;top:965.84px;font-size:11px;line-height:12.29px;color:#5a5a5a;transform:scaleX(1.0149);transform-origin:0 0;">Đã phá...</div><div class="a" style="left:84px;top:983px;width:147px;height:21px;background:#ffffff;"></div><div class="a" style="left:84px;top:1003px;width:147px;height:1px;background:#dedede;"></div><div class="a" style="left:113px;top:983px;width:1px;height:21px;background:#dedede;"></div><div class="a" style="left:176px;top:983px;width:1px;height:21px;background:#dedede;"></div><div class="a t" style="left:89.00px;top:986.67px;font-size:11px;line-height:12.29px;color:#5a5a5a;transform:scaleX(0.9213);transform-origin:0 0;">1C...</div><div class="a t" style="left:117.00px;top:986.67px;font-size:11px;line-height:12.29px;color:#5a5a5a;transform:scaleX(1.0200);transform-origin:0 0;">6</div><div class="a t" style="left:180.00px;top:986.67px;font-size:11px;line-height:12.29px;color:#5a5a5a;transform:scaleX(1.0149);transform-origin:0 0;">Đã phá...</div><div class="a" style="left:84px;top:1004px;width:147px;height:21px;background:#ffffff;"></div><div class="a" style="left:84px;top:1024px;width:147px;height:1px;background:#dedede;"></div><div class="a" style="left:113px;top:1004px;width:1px;height:21px;background:#dedede;"></div><div class="a" style="left:176px;top:1004px;width:1px;height:21px;background:#dedede;"></div><div class="a t" style="left:89.00px;top:1007.50px;font-size:11px;line-height:12.29px;color:#5a5a5a;transform:scaleX(0.9213);transform-origin:0 0;">1C...</div><div class="a t" style="left:117.00px;top:1007.50px;font-size:11px;line-height:12.29px;color:#5a5a5a;transform:scaleX(1.0200);transform-origin:0 0;">61</div><div class="a t" style="left:180.00px;top:1007.50px;font-size:11px;line-height:12.29px;color:#5a5a5a;transform:scaleX(1.0149);transform-origin:0 0;">Đã phá...</div><div class="a" style="left:57px;top:134px;width:1px;height:875px;background:#d8d8d8;"></div><div class="a" style="left:84px;top:134px;width:1px;height:875px;background:#d8d8d8;"></div><div class="a" style="left:32px;top:1009px;width:217px;height:15px;background:#f7f7f7;"></div><div class="a" style="left:32px;top:1009px;width:217px;height:1px;background:#d0d0d0;"></div><div class="a" style="left:92px;top:1019px;width:154px;height:10px;background:#ffffff;border:1px solid #a8a8a8;box-sizing:border-box;"></div><div class="a" style="left:252px;top:62px;width:772px;height:962px;background:#f7f7f7;"></div><div class="a" style="left:252px;top:62px;width:5px;height:962px;background:#e6e6e6;"></div><div class="a" style="left:256px;top:65px;width:768px;height:30px;background:#efefef;"></div><div class="a" style="left:256px;top:94px;width:768px;height:1px;background:#dcdcdc;"></div><div class="a" style="left:261px;top:75px;width:2px;height:2px;background:#9a9a9a;"></div><div class="a" style="left:261px;top:79px;width:2px;height:2px;background:#9a9a9a;"></div><div class="a" style="left:261px;top:83px;width:2px;height:2px;background:#9a9a9a;"></div><svg class="a" style="left:276px;top:71px" width="18" height="18"><circle cx="11" cy="7" r="5.5" stroke="#707070" stroke-width="1.3" fill="#fafafa"/><path d="M7,11L1.5,16.5" stroke="#707070" stroke-width="2.2" stroke-linecap="round"/></svg><div class="a t" style="left:297.00px;top:74.03px;font-size:13px;line-height:14.52px;color:#5a5a5a;transform:scaleX(0.9522);transform-origin:0 0;">Nhân bản HĐ</div><div class="a" style="left:385px;top:69px;width:1px;height:22px;background:#d6d6d6;"></div><svg class="a" style="left:397px;top:71px" width="15" height="18"><path d="M5,1.5H13.5V16.5H1.5V5Z" stroke="#8a8a8a" stroke-width="1" fill="#fcfcfc"/><path d="M5,1.5V5H1.5" stroke="#8a8a8a" fill="none"/><path d="M6.5,3.5L10.5,7.5M10.5,3.5L6.5,7.5" stroke="#e03030" stroke-width="1.4"/><rect x="3" y="11" width="9" height="3.5" fill="#a8a8a8"/></svg><div class="a t" style="left:418.00px;top:74.03px;font-size:13px;line-height:14.52px;color:#5a5a5a;transform:scaleX(0.9449);transform-origin:0 0;">Hủy HĐ</div><div class="a" style="left:473px;top:69px;width:1px;height:22px;background:#d6d6d6;"></div><svg class="a" style="left:487px;top:71px" width="15" height="18"><path d="M5,1.5H13.5V16.5H1.5V5Z" stroke="#8a8a8a" stroke-width="1" fill="#fcfcfc"/><path d="M5,1.5V5H1.5" stroke="#8a8a8a" fill="none"/><path d="M5.2,8.3A3.6,3.6 0 1 0 7.5,7.2" stroke="#606060" stroke-width="1.1" fill="none"/><path d="M4.2,6.2L5.3,8.8L7.8,7.9" stroke="#606060" stroke-width="1" fill="none"/></svg><div class="a t" style="left:507.00px;top:74.03px;font-size:13px;line-height:14.52px;color:#5a5a5a;transform:scaleX(0.9444);transform-origin:0 0;">Lập HĐ điều chỉnh</div><div class="a" style="left:621px;top:69px;width:1px;height:22px;background:#d6d6d6;"></div><svg class="a" style="left:634px;top:71px" width="15" height="18"><path d="M5,1.5H13.5V16.5H1.5V5Z" stroke="#8a8a8a" stroke-width="1" fill="#fcfcfc"/><path d="M5,1.5V5H1.5" stroke="#8a8a8a" fill="none"/><path d="M3.5,8.5H8.5M3.5,8.5L5.5,6.5M3.5,8.5L5.5,10.5M6.5,12.5H11.5M11.5,12.5L9.5,10.5M11.5,12.5L9.5,14.5" stroke="#303030" stroke-width="1.1" fill="none"/></svg><div class="a t" style="left:654.00px;top:74.03px;font-size:13px;line-height:14.52px;color:#5a5a5a;transform:scaleX(0.9581);transform-origin:0 0;">Lập HĐ thay thế</div><div class="a" style="left:755px;top:69px;width:1px;height:22px;background:#d6d6d6;"></div><svg class="a" style="left:768px;top:75px" width="15" height="11"><path d="M1,1L7.5,6L14,1M1,10L5.5,5.5M14,10L9.5,5.5M1,1V10M14,1V10" stroke="#8a8a8a" stroke-width="1" fill="none"/></svg><div class="a t" style="left:788.00px;top:74.03px;font-size:13px;line-height:14.52px;color:#5a5a5a;transform:scaleX(0.9224);transform-origin:0 0;">Gửi email</div><div class="a" style="left:852px;top:69px;width:1px;height:22px;background:#d6d6d6;"></div><svg class="a" style="left:865px;top:71px" width="15" height="18"><path d="M5,1.5H13.5V16.5H1.5V5Z" stroke="#8a8a8a" stroke-width="1" fill="#fcfcfc"/><path d="M5,1.5V5H1.5" stroke="#8a8a8a" fill="none"/><path d="M6,6H9.5V8.3H6Z" fill="#5a9af0"/><path d="M3.8,9.3Q3.8,8.2 5,8.2H10.6Q11.8,8.2 11.8,9.3V11.3H3.8Z" fill="#3a7ee8"/><path d="M5.3,11.2L7.6,14.6L9.9,11.2" stroke="#6aa6f2" stroke-width="1.3" fill="none"/></svg><div class="a t" style="left:886.00px;top:74.03px;font-size:13px;line-height:14.52px;color:#5a5a5a;transform:scaleX(0.9508);transform-origin:0 0;">Chuyển HĐ giấy</div><div class="a" style="left:257px;top:95px;width:767px;height:22px;background:#e6e6e6;"></div><div class="a t" style="left:269.00px;top:100.44px;font-size:12px;line-height:13.40px;color:#4a96ec;font-weight:bold;transform:scaleX(0.9420);transform-origin:0 0;">Tìm kiếm</div><div class="a" style="left:257px;top:117px;width:767px;height:92px;background:#f7f7f7;"></div><div class="a t" style="left:264.00px;top:129.14px;font-size:12px;line-height:13.40px;color:#606060;transform:scaleX(0.8996);transform-origin:0 0;">Từ khóa tìm kiếm:</div><div class="a" style="left:358px;top:125px;width:151px;height:21px;background:#ffffff;border:1px solid #b4b4b4;box-sizing:border-box;"></div><div class="a t" style="left:255.00px;top:155.14px;font-size:12px;line-height:13.40px;color:#606060;transform:scaleX(0.9159);transform-origin:0 0;">Trạng thái hóa đơn:</div><div class="a" style="left:358px;top:153px;width:151px;height:21px;background:#ffffff;border:1px solid #b4b4b4;box-sizing:border-box;"></div><div class="a t" style="left:362.00px;top:157.14px;font-size:12px;line-height:13.40px;color:#606060;transform:scaleX(0.9200);transform-origin:0 0;">Tất cả</div><svg class="a" style="left:496px;top:162px" width="6" height="4"><path d="M0,0H6L3,3Z" fill="#707070"/></svg><div class="a t" style="left:260.00px;top:182.14px;font-size:12px;line-height:13.40px;color:#606060;transform:scaleX(0.8987);transform-origin:0 0;">Tính chất hóa đơn:</div><div class="a" style="left:358px;top:180px;width:151px;height:21px;background:#ffffff;border:1px solid #b4b4b4;box-sizing:border-box;"></div><div class="a t" style="left:362.00px;top:184.14px;font-size:12px;line-height:13.40px;color:#606060;transform:scaleX(0.9200);transform-origin:0 0;">Tất cả</div><svg class="a" style="left:496px;top:189px" width="6" height="4"><path d="M0,0H6L3,3Z" fill="#707070"/></svg><div class="a t" style="left:521.00px;top:129.14px;font-size:12px;line-height:13.40px;color:#606060;transform:scaleX(0.9306);transform-origin:0 0;">Tình trạng:</div><div class="a" style="left:583px;top:126px;width:285px;height:22px;background:#ffffff;border:1px solid #c0c0c0;box-sizing:border-box;"></div><svg class="a" style="left:589px;top:131px" width="15" height="15"><circle cx="7.5" cy="7.5" r="6.7" stroke="#8a8a8a" stroke-width="1" fill="#fff"/><circle cx="7.5" cy="7.5" r="3.3" fill="#707070"/></svg><div class="a t" style="left:608.00px;top:132.14px;font-size:12px;line-height:13.40px;color:#606060;transform:scaleX(0.9297);transform-origin:0 0;">Tất cả</div><svg class="a" style="left:681px;top:131px" width="15" height="15"><circle cx="7.5" cy="7.5" r="6.7" stroke="#8a8a8a" stroke-width="1" fill="#fff"/></svg><div class="a t" style="left:699.00px;top:132.14px;font-size:12px;line-height:13.40px;color:#606060;transform:scaleX(0.8918);transform-origin:0 0;">Hợp lệ</div><svg class="a" style="left:772px;top:131px" width="15" height="15"><circle cx="7.5" cy="7.5" r="6.7" stroke="#8a8a8a" stroke-width="1" fill="#fff"/></svg><div class="a t" style="left:790.00px;top:132.14px;font-size:12px;line-height:13.40px;color:#606060;transform:scaleX(0.9038);transform-origin:0 0;">Không hợp lệ</div><div class="a t" style="left:531.00px;top:154.14px;font-size:12px;line-height:13.40px;color:#606060;transform:scaleX(0.9157);transform-origin:0 0;">Từ ngày:</div><div class="a" style="left:585px;top:153px;width:96px;height:21px;background:#ffffff;border:1px solid #b4b4b4;box-sizing:border-box;"></div><div class="a t" style="left:589.00px;top:157.14px;font-size:12px;line-height:13.40px;color:#606060;transform:scaleX(0.9200);transform-origin:0 0;">01/03/2022</div><svg class="a" style="left:668px;top:162px" width="6" height="4"><path d="M0,0H6L3,3Z" fill="#707070"/></svg><div class="a t" style="left:714.00px;top:154.14px;font-size:12px;line-height:13.40px;color:#606060;transform:scaleX(0.9866);transform-origin:0 0;">đến ngày:</div><div class="a" style="left:773px;top:153px;width:95px;height:21px;background:#ffffff;border:1px solid #b4b4b4;box-sizing:border-box;"></div><div class="a t" style="left:777.00px;top:157.14px;font-size:12px;line-height:13.40px;color:#606060;transform:scaleX(0.9200);transform-origin:0 0;">30/08/2022</div><svg class="a" style="left:855px;top:162px" width="6" height="4"><path d="M0,0H6L3,3Z" fill="#707070"/></svg><div class="a t" style="left:546.00px;top:181.14px;font-size:12px;line-height:13.40px;color:#606060;transform:scaleX(0.9221);transform-origin:0 0;">Từ số:</div><div class="a" style="left:585px;top:180px;width:96px;height:21px;background:#ffffff;border:1px solid #b4b4b4;box-sizing:border-box;"></div><div class="a t" style="left:730.00px;top:181.14px;font-size:12px;line-height:13.40px;color:#606060;transform:scaleX(0.9146);transform-origin:0 0;">đến số:</div><div class="a" style="left:845px;top:196px;width:15px;height:8px;background:#ffffff;border:1px solid #b4b4b4;box-sizing:border-box;"></div><div class="a t" style="left:805.00px;top:193.14px;font-size:12px;line-height:13.40px;color:#606060;">y</div><div class="a" style="left:773px;top:180px;width:95px;height:21px;background:#ffffff;border:1px solid #b4b4b4;box-sizing:border-box;"></div><div class="a t" style="left:869.00px;top:190.14px;font-size:12px;line-height:13.40px;color:#606060;transform:scaleX(0.9594);transform-origin:0 0;">Chưa gửi mail</div><div class="a" style="left:945px;top:189px;width:15px;height:15px;background:#ffffff;border:1px solid #9a9a9a;box-sizing:border-box;"></div><div class="a t" style="left:982.00px;top:189.14px;font-size:12px;line-height:13.40px;color:#606060;transform:scaleX(1.0855);transform-origin:0 0;">Đồng b</div><div class="a" style="left:875px;top:124px;width:85px;height:57px;background:#ffffff;border:2px solid #1c64b8;box-sizing:border-box;"></div><div class="a" style="left:878px;top:127px;width:79px;height:51px;border:1px dotted #303030;box-sizing:border-box;"></div><div class="a t" style="left:884.00px;top:146.54px;font-size:11px;line-height:12.29px;color:#404040;font-weight:bold;transform:scaleX(0.9450);transform-origin:0 0;">Tìm kiếm (F3)</div><div class="a" style="left:966px;top:124px;width:70px;height:26px;background:#ffffff;border:1px solid #c8c8c8;box-sizing:border-box;"></div><div class="a t" style="left:980.50px;top:131.04px;font-size:11px;line-height:12.29px;color:#484848;font-weight:bold;transform:scaleX(0.9088);transform-origin:0 0;">Kiểm tra</div><div class="a" style="left:966px;top:155px;width:70px;height:26px;background:#ffffff;border:1px solid #c8c8c8;box-sizing:border-box;"></div><div class="a t" style="left:984.00px;top:162.04px;font-size:11px;line-height:12.29px;color:#484848;font-weight:bold;transform:scaleX(0.9419);transform-origin:0 0;">Đồng bộ</div><div class="a" style="left:257px;top:209px;width:767px;height:606px;background:#ffffff;"></div><div class="a" style="left:257px;top:209px;width:767px;height:49px;background:#f7f7f7;"></div><div class="a" style="left:257px;top:209px;width:767px;height:1px;background:#d0d0d0;"></div><div class="a" style="left:257px;top:209px;width:1px;height:606px;background:#d0d0d0;"></div><div class="a" style="left:350px;top:233px;width:393px;height:1px;background:#dadada;"></div><div class="a" style="left:745px;top:233px;width:105px;height:1px;background:#dadada;"></div><div class="a" style="left:257px;top:257px;width:767px;height:1px;background:#d4d4d4;"></div><div class="a" style="left:257px;top:286px;width:767px;height:1px;background:#cccccc;"></div><div class="a" style="left:281px;top:209px;width:1px;height:49px;background:#dadada;"></div><div class="a" style="left:350px;top:233px;width:1px;height:25px;background:#dadada;"></div><div class="a" style="left:350px;top:209px;width:1px;height:24px;background:#dadada;"></div><div class="a" style="left:428px;top:234px;width:1px;height:24px;background:#dadada;"></div><div class="a" style="left:521px;top:234px;width:1px;height:24px;background:#dadada;"></div><div class="a" style="left:619px;top:234px;width:1px;height:24px;background:#dadada;"></div><div class="a" style="left:743px;top:209px;width:1px;height:606px;background:#a8a8a8;"></div><div class="a" style="left:744px;top:209px;width:1px;height:606px;background:#d4d4d4;"></div><div class="a" style="left:850px;top:209px;width:1px;height:606px;background:#a0a0a0;"></div><div class="a" style="left:851px;top:209px;width:1px;height:606px;background:#d0d0d0;"></div><div class="a" style="left:944px;top:209px;width:1px;height:49px;background:#dadada;"></div><div class="a t" style="left:306.00px;top:228.59px;font-size:11.5px;line-height:12.85px;color:#767676;font-weight:bold;transform:scaleX(0.8748);transform-origin:0 0;">STT</div><div class="a t" style="left:496.00px;top:216.59px;font-size:11.5px;line-height:12.85px;color:#767676;font-weight:bold;transform:scaleX(1.0057);transform-origin:0 0;">Thông tin hóa đơn</div><div class="a t" style="left:368.00px;top:240.59px;font-size:11.5px;line-height:12.85px;color:#767676;font-weight:bold;transform:scaleX(1.0112);transform-origin:0 0;">Ký hiệu</div><div class="a t" style="left:458.50px;top:240.59px;font-size:11.5px;line-height:12.85px;color:#767676;font-weight:bold;transform:scaleX(0.9565);transform-origin:0 0;">Số HĐ</div><div class="a t" style="left:545.50px;top:240.59px;font-size:11.5px;line-height:12.85px;color:#767676;font-weight:bold;transform:scaleX(1.0224);transform-origin:0 0;">Ngày HĐ</div><div class="a t" style="left:651.00px;top:240.59px;font-size:11.5px;line-height:12.85px;color:#767676;font-weight:bold;transform:scaleX(0.9676);transform-origin:0 0;">Tra cứu HĐ</div><div class="a t" style="left:765.00px;top:240.59px;font-size:11.5px;line-height:12.85px;color:#767676;font-weight:bold;transform:scaleX(0.9945);transform-origin:0 0;">Mã cơ quan thu</div><div class="a t" style="left:883.50px;top:215.59px;font-size:11.5px;line-height:12.85px;color:#767676;font-weight:bold;transform:scaleX(0.9261);transform-origin:0 0;">Ký số</div><div class="a t" style="left:977.00px;top:215.59px;font-size:11.5px;line-height:12.85px;color:#767676;font-weight:bold;transform:scaleX(1.0212);transform-origin:0 0;">Chọn</div><svg class="a" style="left:264px;top:266px" width="10" height="10"><path d="M0,0.5H10L6,5V9.5L4,8.5V5Z" fill="#707070"/></svg><div class="a" style="left:289px;top:271px;width:9px;height:1px;background:#707070;"></div><div class="a" style="left:289px;top:274px;width:9px;height:1px;background:#707070;"></div><svg class="a" style="left:354px;top:267px" width="18" height="11" shape-rendering="crispEdges"><path d="M1,3H4V8H3V6H2V8H1ZM2,4V5H3V4Z" fill="#5a5a5a"/><rect x="5" y="0" width="7" height="11" fill="#2e8b3e"/><path d="M7,3H10V8H7ZM8,4V5H9V4ZM8,6V7H9V6Z" fill="#ffffff"/><path d="M14,3H17V4H15V7H17V8H14Z" fill="#5a5a5a"/></svg><svg class="a" style="left:433px;top:267px" width="18" height="11" shape-rendering="crispEdges"><path d="M1,3H4V8H3V6H2V8H1ZM2,4V5H3V4Z" fill="#5a5a5a"/><rect x="5" y="0" width="7" height="11" fill="#2e8b3e"/><path d="M7,3H10V8H7ZM8,4V5H9V4ZM8,6V7H9V6Z" fill="#ffffff"/><path d="M14,3H17V4H15V7H17V8H14Z" fill="#5a5a5a"/></svg><svg class="a" style="left:525px;top:267px" width="18" height="11" shape-rendering="crispEdges"><path d="M1,3H4V8H3V6H2V8H1ZM2,4V5H3V4Z" fill="#5a5a5a"/><rect x="5" y="0" width="7" height="11" fill="#2e8b3e"/><path d="M7,3H10V8H7ZM8,4V5H9V4ZM8,6V7H9V6Z" fill="#ffffff"/><path d="M14,3H17V4H15V7H17V8H14Z" fill="#5a5a5a"/></svg><svg class="a" style="left:624px;top:267px" width="18" height="11" shape-rendering="crispEdges"><path d="M1,3H4V8H3V6H2V8H1ZM2,4V5H3V4Z" fill="#5a5a5a"/><rect x="5" y="0" width="7" height="11" fill="#2e8b3e"/><path d="M7,3H10V8H7ZM8,4V5H9V4ZM8,6V7H9V6Z" fill="#ffffff"/><path d="M14,3H17V4H15V7H17V8H14Z" fill="#5a5a5a"/></svg><svg class="a" style="left:748px;top:267px" width="18" height="11" shape-rendering="crispEdges"><path d="M1,3H4V8H3V6H2V8H1ZM2,4V5H3V4Z" fill="#5a5a5a"/><rect x="5" y="0" width="7" height="11" fill="#2e8b3e"/><path d="M7,3H10V8H7ZM8,4V5H9V4ZM8,6V7H9V6Z" fill="#ffffff"/><path d="M14,3H17V4H15V7H17V8H14Z" fill="#5a5a5a"/></svg><div class="a" style="left:281px;top:258px;width:1px;height:28px;background:#dcdcdc;"></div><div class="a" style="left:350px;top:258px;width:1px;height:28px;background:#dcdcdc;"></div><div class="a" style="left:428px;top:258px;width:1px;height:28px;background:#dcdcdc;"></div><div class="a" style="left:521px;top:258px;width:1px;height:28px;background:#dcdcdc;"></div><div class="a" style="left:619px;top:258px;width:1px;height:28px;background:#dcdcdc;"></div><div class="a" style="left:944px;top:258px;width:1px;height:28px;background:#dcdcdc;"></div><div class="a" style="left:890px;top:264px;width:15px;height:15px;background:#ffffff;border:1px solid #a0a0a0;box-sizing:border-box;"></div><div class="a" style="left:985px;top:264px;width:15px;height:15px;background:#ffffff;border:1px solid #a0a0a0;box-sizing:border-box;"></div><div class="a" style="left:281px;top:314px;width:743px;height:1px;background:#dcdcdc;"></div><div class="a" style="left:281px;top:286px;width:1px;height:28px;background:#dcdcdc;"></div><div class="a" style="left:350px;top:286px;width:1px;height:28px;background:#dcdcdc;"></div><div class="a" style="left:428px;top:286px;width:1px;height:28px;background:#dcdcdc;"></div><div class="a" style="left:521px;top:286px;width:1px;height:28px;background:#dcdcdc;"></div><div class="a" style="left:619px;top:286px;width:1px;height:28px;background:#dcdcdc;"></div><div class="a" style="left:944px;top:286px;width:1px;height:28px;background:#dcdcdc;"></div><div class="a t" style="left:309.50px;top:294.55px;font-size:11px;line-height:12.29px;color:#555555;transform:scaleX(1.0626);transform-origin:0 0;">40</div><div class="a t" style="left:367.00px;top:294.55px;font-size:11px;line-height:12.29px;color:#555555;transform:scaleX(0.9318);transform-origin:0 0;">1C22THA</div><div class="a t" style="left:460.00px;top:294.55px;font-size:11px;line-height:12.29px;color:#3a8ee0;transform:scaleX(1.0136);transform-origin:0 0;text-decoration:underline;">16335</div><div class="a t" style="left:526.00px;top:294.55px;font-size:11px;line-height:12.29px;color:#555555;transform:scaleX(1.0536);transform-origin:0 0;">27/04/2022</div><div class="a t" style="left:623.00px;top:294.55px;font-size:11px;line-height:12.29px;color:#3a8ee0;transform:scaleX(0.9285);transform-origin:0 0;text-decoration:underline;">Xem</div><div class="a" style="left:688px;top:287px;width:55px;height:27px;background:#f5f5f5;border:1px solid #a8a8a8;box-sizing:border-box;border-right:2px solid #808080;border-bottom:2px solid #808080;"></div><div class="a t" style="left:692.00px;top:294.55px;font-size:11px;line-height:12.29px;color:#202020;transform:scaleX(0.9897);transform-origin:0 0;">Sao chép</div><svg class="a" style="left:884px;top:286px" width="26" height="26"><path d="M7.8,16.2L13,21.2L21.3,8.6" stroke="#2f8f28" stroke-opacity="0.55" stroke-width="3.6" stroke-linecap="round" stroke-linejoin="round" fill="none" transform="translate(0.6,0.6)"/><path d="M7.5,15.8L12.6,20.8L21,8.2" stroke="#58d444" stroke-width="3.2" stroke-linecap="round" stroke-linejoin="round" fill="none"/></svg><div class="a" style="left:985px;top:293px;width:15px;height:15px;background:#ffffff;border:1px solid #a8a8a8;box-sizing:border-box;"></div><div class="a" style="left:281px;top:343px;width:743px;height:1px;background:#dcdcdc;"></div><div class="a" style="left:281px;top:314px;width:1px;height:29px;background:#dcdcdc;"></div><div class="a" style="left:350px;top:314px;width:1px;height:29px;background:#dcdcdc;"></div><div class="a" style="left:428px;top:314px;width:1px;height:29px;background:#dcdcdc;"></div><div class="a" style="left:521px;top:314px;width:1px;height:29px;background:#dcdcdc;"></div><div class="a" style="left:619px;top:314px;width:1px;height:29px;background:#dcdcdc;"></div><div class="a" style="left:944px;top:314px;width:1px;height:29px;background:#dcdcdc;"></div><div class="a t" style="left:309.50px;top:322.72px;font-size:11px;line-height:12.29px;color:#555555;transform:scaleX(1.0626);transform-origin:0 0;">41</div><div class="a t" style="left:367.00px;top:322.72px;font-size:11px;line-height:12.29px;color:#555555;transform:scaleX(0.9318);transform-origin:0 0;">1C22THA</div><div class="a t" style="left:460.00px;top:322.72px;font-size:11px;line-height:12.29px;color:#3a8ee0;transform:scaleX(1.0136);transform-origin:0 0;text-decoration:underline;">16334</div><div class="a t" style="left:526.00px;top:322.72px;font-size:11px;line-height:12.29px;color:#555555;transform:scaleX(1.0536);transform-origin:0 0;">27/04/2022</div><div class="a t" style="left:623.00px;top:322.72px;font-size:11px;line-height:12.29px;color:#3a8ee0;transform:scaleX(0.9285);transform-origin:0 0;text-decoration:underline;">Xem</div><div class="a" style="left:688px;top:315px;width:55px;height:28px;background:#f5f5f5;border:1px solid #a8a8a8;box-sizing:border-box;border-right:2px solid #808080;border-bottom:2px solid #808080;"></div><div class="a t" style="left:692.00px;top:322.72px;font-size:11px;line-height:12.29px;color:#202020;transform:scaleX(0.9897);transform-origin:0 0;">Sao chép</div><svg class="a" style="left:884px;top:314px" width="26" height="26"><path d="M7.8,16.2L13,21.2L21.3,8.6" stroke="#2f8f28" stroke-opacity="0.55" stroke-width="3.6" stroke-linecap="round" stroke-linejoin="round" fill="none" transform="translate(0.6,0.6)"/><path d="M7.5,15.8L12.6,20.8L21,8.2" stroke="#58d444" stroke-width="3.2" stroke-linecap="round" stroke-linejoin="round" fill="none"/></svg><div class="a" style="left:985px;top:321px;width:15px;height:15px;background:#ffffff;border:1px solid #a8a8a8;box-sizing:border-box;"></div><div class="a" style="left:281px;top:371px;width:743px;height:1px;background:#dcdcdc;"></div><div class="a" style="left:281px;top:343px;width:1px;height:28px;background:#dcdcdc;"></div><div class="a" style="left:350px;top:343px;width:1px;height:28px;background:#dcdcdc;"></div><div class="a" style="left:428px;top:343px;width:1px;height:28px;background:#dcdcdc;"></div><div class="a" style="left:521px;top:343px;width:1px;height:28px;background:#dcdcdc;"></div><div class="a" style="left:619px;top:343px;width:1px;height:28px;background:#dcdcdc;"></div><div class="a" style="left:944px;top:343px;width:1px;height:28px;background:#dcdcdc;"></div><div class="a t" style="left:309.50px;top:350.88px;font-size:11px;line-height:12.29px;color:#555555;transform:scaleX(1.0626);transform-origin:0 0;">42</div><div class="a t" style="left:367.00px;top:350.88px;font-size:11px;line-height:12.29px;color:#555555;transform:scaleX(0.9318);transform-origin:0 0;">1C22THA</div><div class="a t" style="left:460.00px;top:350.88px;font-size:11px;line-height:12.29px;color:#3a8ee0;transform:scaleX(1.0136);transform-origin:0 0;text-decoration:underline;">16333</div><div class="a t" style="left:526.00px;top:350.88px;font-size:11px;line-height:12.29px;color:#555555;transform:scaleX(1.0536);transform-origin:0 0;">27/04/2022</div><div class="a t" style="left:623.00px;top:350.88px;font-size:11px;line-height:12.29px;color:#3a8ee0;transform:scaleX(0.9285);transform-origin:0 0;text-decoration:underline;">Xem</div><div class="a" style="left:688px;top:344px;width:55px;height:27px;background:#f5f5f5;border:1px solid #a8a8a8;box-sizing:border-box;border-right:2px solid #808080;border-bottom:2px solid #808080;"></div><div class="a t" style="left:692.00px;top:350.88px;font-size:11px;line-height:12.29px;color:#202020;transform:scaleX(0.9897);transform-origin:0 0;">Sao chép</div><svg class="a" style="left:884px;top:343px" width="26" height="26"><path d="M7.8,16.2L13,21.2L21.3,8.6" stroke="#2f8f28" stroke-opacity="0.55" stroke-width="3.6" stroke-linecap="round" stroke-linejoin="round" fill="none" transform="translate(0.6,0.6)"/><path d="M7.5,15.8L12.6,20.8L21,8.2" stroke="#58d444" stroke-width="3.2" stroke-linecap="round" stroke-linejoin="round" fill="none"/></svg><div class="a" style="left:985px;top:350px;width:15px;height:15px;background:#ffffff;border:1px solid #a8a8a8;box-sizing:border-box;"></div><div class="a" style="left:281px;top:399px;width:743px;height:1px;background:#dcdcdc;"></div><div class="a" style="left:281px;top:371px;width:1px;height:28px;background:#dcdcdc;"></div><div class="a" style="left:350px;top:371px;width:1px;height:28px;background:#dcdcdc;"></div><div class="a" style="left:428px;top:371px;width:1px;height:28px;background:#dcdcdc;"></div><div class="a" style="left:521px;top:371px;width:1px;height:28px;background:#dcdcdc;"></div><div class="a" style="left:619px;top:371px;width:1px;height:28px;background:#dcdcdc;"></div><div class="a" style="left:944px;top:371px;width:1px;height:28px;background:#dcdcdc;"></div><div class="a t" style="left:309.50px;top:379.06px;font-size:11px;line-height:12.29px;color:#555555;transform:scaleX(1.0626);transform-origin:0 0;">43</div><div class="a t" style="left:367.00px;top:379.06px;font-size:11px;line-height:12.29px;color:#555555;transform:scaleX(0.9318);transform-origin:0 0;">1C22THA</div><div class="a t" style="left:460.00px;top:379.06px;font-size:11px;line-height:12.29px;color:#3a8ee0;transform:scaleX(1.0136);transform-origin:0 0;text-decoration:underline;">16332</div><div class="a t" style="left:526.00px;top:379.06px;font-size:11px;line-height:12.29px;color:#555555;transform:scaleX(1.0536);transform-origin:0 0;">27/04/2022</div><div class="a t" style="left:623.00px;top:379.06px;font-size:11px;line-height:12.29px;color:#3a8ee0;transform:scaleX(0.9285);transform-origin:0 0;text-decoration:underline;">Xem</div><div class="a" style="left:688px;top:372px;width:55px;height:27px;background:#f5f5f5;border:1px solid #a8a8a8;box-sizing:border-box;border-right:2px solid #808080;border-bottom:2px solid #808080;"></div><div class="a t" style="left:692.00px;top:379.06px;font-size:11px;line-height:12.29px;color:#202020;transform:scaleX(0.9897);transform-origin:0 0;">Sao chép</div><svg class="a" style="left:884px;top:371px" width="26" height="26"><path d="M7.8,16.2L13,21.2L21.3,8.6" stroke="#2f8f28" stroke-opacity="0.55" stroke-width="3.6" stroke-linecap="round" stroke-linejoin="round" fill="none" transform="translate(0.6,0.6)"/><path d="M7.5,15.8L12.6,20.8L21,8.2" stroke="#58d444" stroke-width="3.2" stroke-linecap="round" stroke-linejoin="round" fill="none"/></svg><div class="a" style="left:985px;top:378px;width:15px;height:15px;background:#ffffff;border:1px solid #a8a8a8;box-sizing:border-box;"></div><div class="a" style="left:281px;top:427px;width:743px;height:1px;background:#dcdcdc;"></div><div class="a" style="left:281px;top:399px;width:1px;height:28px;background:#dcdcdc;"></div><div class="a" style="left:350px;top:399px;width:1px;height:28px;background:#dcdcdc;"></div><div class="a" style="left:428px;top:399px;width:1px;height:28px;background:#dcdcdc;"></div><div class="a" style="left:521px;top:399px;width:1px;height:28px;background:#dcdcdc;"></div><div class="a" style="left:619px;top:399px;width:1px;height:28px;background:#dcdcdc;"></div><div class="a" style="left:944px;top:399px;width:1px;height:28px;background:#dcdcdc;"></div><div class="a t" style="left:309.50px;top:407.23px;font-size:11px;line-height:12.29px;color:#555555;transform:scaleX(1.0626);transform-origin:0 0;">44</div><div class="a t" style="left:367.00px;top:407.23px;font-size:11px;line-height:12.29px;color:#555555;transform:scaleX(0.9318);transform-origin:0 0;">1C22THA</div><div class="a t" style="left:460.00px;top:407.23px;font-size:11px;line-height:12.29px;color:#3a8ee0;transform:scaleX(1.0136);transform-origin:0 0;text-decoration:underline;">16331</div><div class="a t" style="left:526.00px;top:407.23px;font-size:11px;line-height:12.29px;color:#555555;transform:scaleX(1.0536);transform-origin:0 0;">27/04/2022</div><div class="a t" style="left:623.00px;top:407.23px;font-size:11px;line-height:12.29px;color:#3a8ee0;transform:scaleX(0.9285);transform-origin:0 0;text-decoration:underline;">Xem</div><div class="a" style="left:688px;top:400px;width:55px;height:27px;background:#f5f5f5;border:1px solid #a8a8a8;box-sizing:border-box;border-right:2px solid #808080;border-bottom:2px solid #808080;"></div><div class="a t" style="left:692.00px;top:407.23px;font-size:11px;line-height:12.29px;color:#202020;transform:scaleX(0.9897);transform-origin:0 0;">Sao chép</div><svg class="a" style="left:884px;top:399px" width="26" height="26"><path d="M7.8,16.2L13,21.2L21.3,8.6" stroke="#2f8f28" stroke-opacity="0.55" stroke-width="3.6" stroke-linecap="round" stroke-linejoin="round" fill="none" transform="translate(0.6,0.6)"/><path d="M7.5,15.8L12.6,20.8L21,8.2" stroke="#58d444" stroke-width="3.2" stroke-linecap="round" stroke-linejoin="round" fill="none"/></svg><div class="a" style="left:985px;top:406px;width:15px;height:15px;background:#ffffff;border:1px solid #a8a8a8;box-sizing:border-box;"></div><div class="a" style="left:281px;top:455px;width:743px;height:1px;background:#dcdcdc;"></div><div class="a" style="left:281px;top:427px;width:1px;height:28px;background:#dcdcdc;"></div><div class="a" style="left:350px;top:427px;width:1px;height:28px;background:#dcdcdc;"></div><div class="a" style="left:428px;top:427px;width:1px;height:28px;background:#dcdcdc;"></div><div class="a" style="left:521px;top:427px;width:1px;height:28px;background:#dcdcdc;"></div><div class="a" style="left:619px;top:427px;width:1px;height:28px;background:#dcdcdc;"></div><div class="a" style="left:944px;top:427px;width:1px;height:28px;background:#dcdcdc;"></div><div class="a t" style="left:309.50px;top:435.40px;font-size:11px;line-height:12.29px;color:#555555;transform:scaleX(1.0626);transform-origin:0 0;">45</div><div class="a t" style="left:367.00px;top:435.40px;font-size:11px;line-height:12.29px;color:#555555;transform:scaleX(0.9318);transform-origin:0 0;">1C22THA</div><div class="a t" style="left:460.00px;top:435.40px;font-size:11px;line-height:12.29px;color:#3a8ee0;transform:scaleX(1.0136);transform-origin:0 0;text-decoration:underline;">16330</div><div class="a t" style="left:526.00px;top:435.40px;font-size:11px;line-height:12.29px;color:#555555;transform:scaleX(1.0536);transform-origin:0 0;">27/04/2022</div><div class="a t" style="left:623.00px;top:435.40px;font-size:11px;line-height:12.29px;color:#3a8ee0;transform:scaleX(0.9285);transform-origin:0 0;text-decoration:underline;">Xem</div><div class="a" style="left:688px;top:428px;width:55px;height:27px;background:#f5f5f5;border:1px solid #a8a8a8;box-sizing:border-box;border-right:2px solid #808080;border-bottom:2px solid #808080;"></div><div class="a t" style="left:692.00px;top:435.40px;font-size:11px;line-height:12.29px;color:#202020;transform:scaleX(0.9897);transform-origin:0 0;">Sao chép</div><svg class="a" style="left:884px;top:427px" width="26" height="26"><path d="M7.8,16.2L13,21.2L21.3,8.6" stroke="#2f8f28" stroke-opacity="0.55" stroke-width="3.6" stroke-linecap="round" stroke-linejoin="round" fill="none" transform="translate(0.6,0.6)"/><path d="M7.5,15.8L12.6,20.8L21,8.2" stroke="#58d444" stroke-width="3.2" stroke-linecap="round" stroke-linejoin="round" fill="none"/></svg><div class="a" style="left:985px;top:434px;width:15px;height:15px;background:#ffffff;border:1px solid #a8a8a8;box-sizing:border-box;"></div><div class="a" style="left:281px;top:483px;width:743px;height:1px;background:#dcdcdc;"></div><div class="a" style="left:281px;top:455px;width:1px;height:28px;background:#dcdcdc;"></div><div class="a" style="left:350px;top:455px;width:1px;height:28px;background:#dcdcdc;"></div><div class="a" style="left:428px;top:455px;width:1px;height:28px;background:#dcdcdc;"></div><div class="a" style="left:521px;top:455px;width:1px;height:28px;background:#dcdcdc;"></div><div class="a" style="left:619px;top:455px;width:1px;height:28px;background:#dcdcdc;"></div><div class="a" style="left:944px;top:455px;width:1px;height:28px;background:#dcdcdc;"></div><div class="a t" style="left:309.50px;top:463.57px;font-size:11px;line-height:12.29px;color:#555555;transform:scaleX(1.0626);transform-origin:0 0;">46</div><div class="a t" style="left:367.00px;top:463.57px;font-size:11px;line-height:12.29px;color:#555555;transform:scaleX(0.9318);transform-origin:0 0;">1C22THA</div><div class="a t" style="left:460.00px;top:463.57px;font-size:11px;line-height:12.29px;color:#3a8ee0;transform:scaleX(1.0136);transform-origin:0 0;text-decoration:underline;">16329</div><div class="a t" style="left:526.00px;top:463.57px;font-size:11px;line-height:12.29px;color:#555555;transform:scaleX(1.0536);transform-origin:0 0;">27/04/2022</div><div class="a t" style="left:623.00px;top:463.57px;font-size:11px;line-height:12.29px;color:#3a8ee0;transform:scaleX(0.9285);transform-origin:0 0;text-decoration:underline;">Xem</div><div class="a" style="left:688px;top:456px;width:55px;height:27px;background:#f5f5f5;border:1px solid #a8a8a8;box-sizing:border-box;border-right:2px solid #808080;border-bottom:2px solid #808080;"></div><div class="a t" style="left:692.00px;top:463.57px;font-size:11px;line-height:12.29px;color:#202020;transform:scaleX(0.9897);transform-origin:0 0;">Sao chép</div><svg class="a" style="left:884px;top:455px" width="26" height="26"><path d="M7.8,16.2L13,21.2L21.3,8.6" stroke="#2f8f28" stroke-opacity="0.55" stroke-width="3.6" stroke-linecap="round" stroke-linejoin="round" fill="none" transform="translate(0.6,0.6)"/><path d="M7.5,15.8L12.6,20.8L21,8.2" stroke="#58d444" stroke-width="3.2" stroke-linecap="round" stroke-linejoin="round" fill="none"/></svg><div class="a" style="left:985px;top:462px;width:15px;height:15px;background:#ffffff;border:1px solid #a8a8a8;box-sizing:border-box;"></div><div class="a" style="left:281px;top:512px;width:743px;height:1px;background:#dcdcdc;"></div><div class="a" style="left:281px;top:483px;width:1px;height:29px;background:#dcdcdc;"></div><div class="a" style="left:350px;top:483px;width:1px;height:29px;background:#dcdcdc;"></div><div class="a" style="left:428px;top:483px;width:1px;height:29px;background:#dcdcdc;"></div><div class="a" style="left:521px;top:483px;width:1px;height:29px;background:#dcdcdc;"></div><div class="a" style="left:619px;top:483px;width:1px;height:29px;background:#dcdcdc;"></div><div class="a" style="left:944px;top:483px;width:1px;height:29px;background:#dcdcdc;"></div><div class="a t" style="left:309.50px;top:491.74px;font-size:11px;line-height:12.29px;color:#555555;transform:scaleX(1.0626);transform-origin:0 0;">47</div><div class="a t" style="left:367.00px;top:491.74px;font-size:11px;line-height:12.29px;color:#555555;transform:scaleX(0.9318);transform-origin:0 0;">1C22THA</div><div class="a t" style="left:460.00px;top:491.74px;font-size:11px;line-height:12.29px;color:#3a8ee0;transform:scaleX(1.0136);transform-origin:0 0;text-decoration:underline;">16328</div><div class="a t" style="left:526.00px;top:491.74px;font-size:11px;line-height:12.29px;color:#555555;transform:scaleX(1.0536);transform-origin:0 0;">27/04/2022</div><div class="a t" style="left:623.00px;top:491.74px;font-size:11px;line-height:12.29px;color:#3a8ee0;transform:scaleX(0.9285);transform-origin:0 0;text-decoration:underline;">Xem</div><div class="a" style="left:688px;top:484px;width:55px;height:28px;background:#f5f5f5;border:1px solid #a8a8a8;box-sizing:border-box;border-right:2px solid #808080;border-bottom:2px solid #808080;"></div><div class="a t" style="left:692.00px;top:491.74px;font-size:11px;line-height:12.29px;color:#202020;transform:scaleX(0.9897);transform-origin:0 0;">Sao chép</div><svg class="a" style="left:884px;top:483px" width="26" height="26"><path d="M7.8,16.2L13,21.2L21.3,8.6" stroke="#2f8f28" stroke-opacity="0.55" stroke-width="3.6" stroke-linecap="round" stroke-linejoin="round" fill="none" transform="translate(0.6,0.6)"/><path d="M7.5,15.8L12.6,20.8L21,8.2" stroke="#58d444" stroke-width="3.2" stroke-linecap="round" stroke-linejoin="round" fill="none"/></svg><div class="a" style="left:985px;top:490px;width:15px;height:15px;background:#ffffff;border:1px solid #a8a8a8;box-sizing:border-box;"></div><div class="a" style="left:281px;top:540px;width:743px;height:1px;background:#dcdcdc;"></div><div class="a" style="left:281px;top:512px;width:1px;height:28px;background:#dcdcdc;"></div><div class="a" style="left:350px;top:512px;width:1px;height:28px;background:#dcdcdc;"></div><div class="a" style="left:428px;top:512px;width:1px;height:28px;background:#dcdcdc;"></div><div class="a" style="left:521px;top:512px;width:1px;height:28px;background:#dcdcdc;"></div><div class="a" style="left:619px;top:512px;width:1px;height:28px;background:#dcdcdc;"></div><div class="a" style="left:944px;top:512px;width:1px;height:28px;background:#dcdcdc;"></div><div class="a t" style="left:309.50px;top:519.90px;font-size:11px;line-height:12.29px;color:#555555;transform:scaleX(1.0626);transform-origin:0 0;">48</div><div class="a t" style="left:367.00px;top:519.90px;font-size:11px;line-height:12.29px;color:#555555;transform:scaleX(0.9318);transform-origin:0 0;">1C22THA</div><div class="a t" style="left:460.00px;top:519.90px;font-size:11px;line-height:12.29px;color:#3a8ee0;transform:scaleX(1.0136);transform-origin:0 0;text-decoration:underline;">16327</div><div class="a t" style="left:526.00px;top:519.90px;font-size:11px;line-height:12.29px;color:#555555;transform:scaleX(1.0536);transform-origin:0 0;">27/04/2022</div><div class="a t" style="left:623.00px;top:519.90px;font-size:11px;line-height:12.29px;color:#3a8ee0;transform:scaleX(0.9285);transform-origin:0 0;text-decoration:underline;">Xem</div><div class="a" style="left:688px;top:513px;width:55px;height:27px;background:#f5f5f5;border:1px solid #a8a8a8;box-sizing:border-box;border-right:2px solid #808080;border-bottom:2px solid #808080;"></div><div class="a t" style="left:692.00px;top:519.90px;font-size:11px;line-height:12.29px;color:#202020;transform:scaleX(0.9897);transform-origin:0 0;">Sao chép</div><svg class="a" style="left:884px;top:512px" width="26" height="26"><path d="M7.8,16.2L13,21.2L21.3,8.6" stroke="#2f8f28" stroke-opacity="0.55" stroke-width="3.6" stroke-linecap="round" stroke-linejoin="round" fill="none" transform="translate(0.6,0.6)"/><path d="M7.5,15.8L12.6,20.8L21,8.2" stroke="#58d444" stroke-width="3.2" stroke-linecap="round" stroke-linejoin="round" fill="none"/></svg><div class="a" style="left:985px;top:519px;width:15px;height:15px;background:#ffffff;border:1px solid #a8a8a8;box-sizing:border-box;"></div><div class="a" style="left:281px;top:568px;width:743px;height:1px;background:#dcdcdc;"></div><div class="a" style="left:281px;top:540px;width:1px;height:28px;background:#dcdcdc;"></div><div class="a" style="left:350px;top:540px;width:1px;height:28px;background:#dcdcdc;"></div><div class="a" style="left:428px;top:540px;width:1px;height:28px;background:#dcdcdc;"></div><div class="a" style="left:521px;top:540px;width:1px;height:28px;background:#dcdcdc;"></div><div class="a" style="left:619px;top:540px;width:1px;height:28px;background:#dcdcdc;"></div><div class="a" style="left:944px;top:540px;width:1px;height:28px;background:#dcdcdc;"></div><div class="a t" style="left:309.50px;top:548.08px;font-size:11px;line-height:12.29px;color:#555555;transform:scaleX(1.0626);transform-origin:0 0;">49</div><div class="a t" style="left:367.00px;top:548.08px;font-size:11px;line-height:12.29px;color:#555555;transform:scaleX(0.9318);transform-origin:0 0;">1C22THA</div><div class="a t" style="left:460.00px;top:548.08px;font-size:11px;line-height:12.29px;color:#3a8ee0;transform:scaleX(1.0136);transform-origin:0 0;text-decoration:underline;">16326</div><div class="a t" style="left:526.00px;top:548.08px;font-size:11px;line-height:12.29px;color:#555555;transform:scaleX(1.0536);transform-origin:0 0;">27/04/2022</div><div class="a t" style="left:623.00px;top:548.08px;font-size:11px;line-height:12.29px;color:#3a8ee0;transform:scaleX(0.9285);transform-origin:0 0;text-decoration:underline;">Xem</div><div class="a" style="left:688px;top:541px;width:55px;height:27px;background:#f5f5f5;border:1px solid #a8a8a8;box-sizing:border-box;border-right:2px solid #808080;border-bottom:2px solid #808080;"></div><div class="a t" style="left:692.00px;top:548.08px;font-size:11px;line-height:12.29px;color:#202020;transform:scaleX(0.9897);transform-origin:0 0;">Sao chép</div><svg class="a" style="left:884px;top:540px" width="26" height="26"><path d="M7.8,16.2L13,21.2L21.3,8.6" stroke="#2f8f28" stroke-opacity="0.55" stroke-width="3.6" stroke-linecap="round" stroke-linejoin="round" fill="none" transform="translate(0.6,0.6)"/><path d="M7.5,15.8L12.6,20.8L21,8.2" stroke="#58d444" stroke-width="3.2" stroke-linecap="round" stroke-linejoin="round" fill="none"/></svg><div class="a" style="left:985px;top:547px;width:15px;height:15px;background:#ffffff;border:1px solid #a8a8a8;box-sizing:border-box;"></div><div class="a" style="left:281px;top:596px;width:743px;height:1px;background:#dcdcdc;"></div><div class="a" style="left:281px;top:568px;width:1px;height:28px;background:#dcdcdc;"></div><div class="a" style="left:350px;top:568px;width:1px;height:28px;background:#dcdcdc;"></div><div class="a" style="left:428px;top:568px;width:1px;height:28px;background:#dcdcdc;"></div><div class="a" style="left:521px;top:568px;width:1px;height:28px;background:#dcdcdc;"></div><div class="a" style="left:619px;top:568px;width:1px;height:28px;background:#dcdcdc;"></div><div class="a" style="left:944px;top:568px;width:1px;height:28px;background:#dcdcdc;"></div><div class="a t" style="left:309.50px;top:576.25px;font-size:11px;line-height:12.29px;color:#555555;transform:scaleX(1.0626);transform-origin:0 0;">50</div><div class="a t" style="left:367.00px;top:576.25px;font-size:11px;line-height:12.29px;color:#555555;transform:scaleX(0.9318);transform-origin:0 0;">1C22THA</div><div class="a t" style="left:460.00px;top:576.25px;font-size:11px;line-height:12.29px;color:#3a8ee0;transform:scaleX(1.0136);transform-origin:0 0;text-decoration:underline;">16325</div><div class="a t" style="left:526.00px;top:576.25px;font-size:11px;line-height:12.29px;color:#555555;transform:scaleX(1.0536);transform-origin:0 0;">27/04/2022</div><div class="a t" style="left:623.00px;top:576.25px;font-size:11px;line-height:12.29px;color:#3a8ee0;transform:scaleX(0.9285);transform-origin:0 0;text-decoration:underline;">Xem</div><div class="a" style="left:688px;top:569px;width:55px;height:27px;background:#f5f5f5;border:1px solid #a8a8a8;box-sizing:border-box;border-right:2px solid #808080;border-bottom:2px solid #808080;"></div><div class="a t" style="left:692.00px;top:576.25px;font-size:11px;line-height:12.29px;color:#202020;transform:scaleX(0.9897);transform-origin:0 0;">Sao chép</div><svg class="a" style="left:884px;top:568px" width="26" height="26"><path d="M7.8,16.2L13,21.2L21.3,8.6" stroke="#2f8f28" stroke-opacity="0.55" stroke-width="3.6" stroke-linecap="round" stroke-linejoin="round" fill="none" transform="translate(0.6,0.6)"/><path d="M7.5,15.8L12.6,20.8L21,8.2" stroke="#58d444" stroke-width="3.2" stroke-linecap="round" stroke-linejoin="round" fill="none"/></svg><div class="a" style="left:985px;top:575px;width:15px;height:15px;background:#ffffff;border:1px solid #a8a8a8;box-sizing:border-box;"></div><div class="a" style="left:281px;top:624px;width:743px;height:1px;background:#dcdcdc;"></div><div class="a" style="left:281px;top:596px;width:1px;height:28px;background:#dcdcdc;"></div><div class="a" style="left:350px;top:596px;width:1px;height:28px;background:#dcdcdc;"></div><div class="a" style="left:428px;top:596px;width:1px;height:28px;background:#dcdcdc;"></div><div class="a" style="left:521px;top:596px;width:1px;height:28px;background:#dcdcdc;"></div><div class="a" style="left:619px;top:596px;width:1px;height:28px;background:#dcdcdc;"></div><div class="a" style="left:944px;top:596px;width:1px;height:28px;background:#dcdcdc;"></div><div class="a t" style="left:309.50px;top:604.42px;font-size:11px;line-height:12.29px;color:#555555;transform:scaleX(1.0626);transform-origin:0 0;">51</div><div class="a t" style="left:367.00px;top:604.42px;font-size:11px;line-height:12.29px;color:#555555;transform:scaleX(0.9318);transform-origin:0 0;">1C22THA</div><div class="a t" style="left:460.00px;top:604.42px;font-size:11px;line-height:12.29px;color:#3a8ee0;transform:scaleX(1.0136);transform-origin:0 0;text-decoration:underline;">16324</div><div class="a t" style="left:526.00px;top:604.42px;font-size:11px;line-height:12.29px;color:#555555;transform:scaleX(1.0536);transform-origin:0 0;">27/04/2022</div><div class="a t" style="left:623.00px;top:604.42px;font-size:11px;line-height:12.29px;color:#3a8ee0;transform:scaleX(0.9285);transform-origin:0 0;text-decoration:underline;">Xem</div><div class="a" style="left:688px;top:597px;width:55px;height:27px;background:#f5f5f5;border:1px solid #a8a8a8;box-sizing:border-box;border-right:2px solid #808080;border-bottom:2px solid #808080;"></div><div class="a t" style="left:692.00px;top:604.42px;font-size:11px;line-height:12.29px;color:#202020;transform:scaleX(0.9897);transform-origin:0 0;">Sao chép</div><svg class="a" style="left:884px;top:596px" width="26" height="26"><path d="M7.8,16.2L13,21.2L21.3,8.6" stroke="#2f8f28" stroke-opacity="0.55" stroke-width="3.6" stroke-linecap="round" stroke-linejoin="round" fill="none" transform="translate(0.6,0.6)"/><path d="M7.5,15.8L12.6,20.8L21,8.2" stroke="#58d444" stroke-width="3.2" stroke-linecap="round" stroke-linejoin="round" fill="none"/></svg><div class="a" style="left:985px;top:603px;width:15px;height:15px;background:#ffffff;border:1px solid #a8a8a8;box-sizing:border-box;"></div><div class="a" style="left:281px;top:653px;width:743px;height:1px;background:#dcdcdc;"></div><div class="a" style="left:281px;top:624px;width:1px;height:29px;background:#dcdcdc;"></div><div class="a" style="left:350px;top:624px;width:1px;height:29px;background:#dcdcdc;"></div><div class="a" style="left:428px;top:624px;width:1px;height:29px;background:#dcdcdc;"></div><div class="a" style="left:521px;top:624px;width:1px;height:29px;background:#dcdcdc;"></div><div class="a" style="left:619px;top:624px;width:1px;height:29px;background:#dcdcdc;"></div><div class="a" style="left:944px;top:624px;width:1px;height:29px;background:#dcdcdc;"></div><div class="a t" style="left:309.50px;top:632.59px;font-size:11px;line-height:12.29px;color:#555555;transform:scaleX(1.0626);transform-origin:0 0;">52</div><div class="a t" style="left:367.00px;top:632.59px;font-size:11px;line-height:12.29px;color:#555555;transform:scaleX(0.9318);transform-origin:0 0;">1C22THA</div><div class="a t" style="left:460.00px;top:632.59px;font-size:11px;line-height:12.29px;color:#3a8ee0;transform:scaleX(1.0136);transform-origin:0 0;text-decoration:underline;">16323</div><div class="a t" style="left:526.00px;top:632.59px;font-size:11px;line-height:12.29px;color:#555555;transform:scaleX(1.0536);transform-origin:0 0;">27/04/2022</div><div class="a t" style="left:623.00px;top:632.59px;font-size:11px;line-height:12.29px;color:#3a8ee0;transform:scaleX(0.9285);transform-origin:0 0;text-decoration:underline;">Xem</div><div class="a" style="left:688px;top:625px;width:55px;height:28px;background:#f5f5f5;border:1px solid #a8a8a8;box-sizing:border-box;border-right:2px solid #808080;border-bottom:2px solid #808080;"></div><div class="a t" style="left:692.00px;top:632.59px;font-size:11px;line-height:12.29px;color:#202020;transform:scaleX(0.9897);transform-origin:0 0;">Sao chép</div><svg class="a" style="left:884px;top:624px" width="26" height="26"><path d="M7.8,16.2L13,21.2L21.3,8.6" stroke="#2f8f28" stroke-opacity="0.55" stroke-width="3.6" stroke-linecap="round" stroke-linejoin="round" fill="none" transform="translate(0.6,0.6)"/><path d="M7.5,15.8L12.6,20.8L21,8.2" stroke="#58d444" stroke-width="3.2" stroke-linecap="round" stroke-linejoin="round" fill="none"/></svg><div class="a" style="left:985px;top:631px;width:15px;height:15px;background:#ffffff;border:1px solid #a8a8a8;box-sizing:border-box;"></div><div class="a" style="left:281px;top:681px;width:743px;height:1px;background:#dcdcdc;"></div><div class="a" style="left:281px;top:653px;width:1px;height:28px;background:#dcdcdc;"></div><div class="a" style="left:350px;top:653px;width:1px;height:28px;background:#dcdcdc;"></div><div class="a" style="left:428px;top:653px;width:1px;height:28px;background:#dcdcdc;"></div><div class="a" style="left:521px;top:653px;width:1px;height:28px;background:#dcdcdc;"></div><div class="a" style="left:619px;top:653px;width:1px;height:28px;background:#dcdcdc;"></div><div class="a" style="left:944px;top:653px;width:1px;height:28px;background:#dcdcdc;"></div><div class="a t" style="left:309.50px;top:660.75px;font-size:11px;line-height:12.29px;color:#555555;transform:scaleX(1.0626);transform-origin:0 0;">53</div><div class="a t" style="left:367.00px;top:660.75px;font-size:11px;line-height:12.29px;color:#555555;transform:scaleX(0.9318);transform-origin:0 0;">1C22THA</div><div class="a t" style="left:460.00px;top:660.75px;font-size:11px;line-height:12.29px;color:#3a8ee0;transform:scaleX(1.0136);transform-origin:0 0;text-decoration:underline;">16322</div><div class="a t" style="left:526.00px;top:660.75px;font-size:11px;line-height:12.29px;color:#555555;transform:scaleX(1.0536);transform-origin:0 0;">27/04/2022</div><div class="a t" style="left:623.00px;top:660.75px;font-size:11px;line-height:12.29px;color:#3a8ee0;transform:scaleX(0.9285);transform-origin:0 0;text-decoration:underline;">Xem</div><div class="a" style="left:688px;top:654px;width:55px;height:27px;background:#f5f5f5;border:1px solid #a8a8a8;box-sizing:border-box;border-right:2px solid #808080;border-bottom:2px solid #808080;"></div><div class="a t" style="left:692.00px;top:660.75px;font-size:11px;line-height:12.29px;color:#202020;transform:scaleX(0.9897);transform-origin:0 0;">Sao chép</div><svg class="a" style="left:884px;top:653px" width="26" height="26"><path d="M7.8,16.2L13,21.2L21.3,8.6" stroke="#2f8f28" stroke-opacity="0.55" stroke-width="3.6" stroke-linecap="round" stroke-linejoin="round" fill="none" transform="translate(0.6,0.6)"/><path d="M7.5,15.8L12.6,20.8L21,8.2" stroke="#58d444" stroke-width="3.2" stroke-linecap="round" stroke-linejoin="round" fill="none"/></svg><div class="a" style="left:985px;top:660px;width:15px;height:15px;background:#ffffff;border:1px solid #a8a8a8;box-sizing:border-box;"></div><div class="a" style="left:281px;top:709px;width:743px;height:1px;background:#dcdcdc;"></div><div class="a" style="left:281px;top:681px;width:1px;height:28px;background:#dcdcdc;"></div><div class="a" style="left:350px;top:681px;width:1px;height:28px;background:#dcdcdc;"></div><div class="a" style="left:428px;top:681px;width:1px;height:28px;background:#dcdcdc;"></div><div class="a" style="left:521px;top:681px;width:1px;height:28px;background:#dcdcdc;"></div><div class="a" style="left:619px;top:681px;width:1px;height:28px;background:#dcdcdc;"></div><div class="a" style="left:944px;top:681px;width:1px;height:28px;background:#dcdcdc;"></div><div class="a t" style="left:309.50px;top:688.93px;font-size:11px;line-height:12.29px;color:#555555;transform:scaleX(1.0626);transform-origin:0 0;">54</div><div class="a t" style="left:367.00px;top:688.93px;font-size:11px;line-height:12.29px;color:#555555;transform:scaleX(0.9318);transform-origin:0 0;">1C22THA</div><div class="a t" style="left:460.00px;top:688.93px;font-size:11px;line-height:12.29px;color:#3a8ee0;transform:scaleX(1.0136);transform-origin:0 0;text-decoration:underline;">16321</div><div class="a t" style="left:526.00px;top:688.93px;font-size:11px;line-height:12.29px;color:#555555;transform:scaleX(1.0536);transform-origin:0 0;">27/04/2022</div><div class="a t" style="left:623.00px;top:688.93px;font-size:11px;line-height:12.29px;color:#3a8ee0;transform:scaleX(0.9285);transform-origin:0 0;text-decoration:underline;">Xem</div><div class="a" style="left:688px;top:682px;width:55px;height:27px;background:#f5f5f5;border:1px solid #a8a8a8;box-sizing:border-box;border-right:2px solid #808080;border-bottom:2px solid #808080;"></div><div class="a t" style="left:692.00px;top:688.93px;font-size:11px;line-height:12.29px;color:#202020;transform:scaleX(0.9897);transform-origin:0 0;">Sao chép</div><svg class="a" style="left:884px;top:681px" width="26" height="26"><path d="M7.8,16.2L13,21.2L21.3,8.6" stroke="#2f8f28" stroke-opacity="0.55" stroke-width="3.6" stroke-linecap="round" stroke-linejoin="round" fill="none" transform="translate(0.6,0.6)"/><path d="M7.5,15.8L12.6,20.8L21,8.2" stroke="#58d444" stroke-width="3.2" stroke-linecap="round" stroke-linejoin="round" fill="none"/></svg><div class="a" style="left:985px;top:688px;width:15px;height:15px;background:#ffffff;border:1px solid #a8a8a8;box-sizing:border-box;"></div><div class="a" style="left:281px;top:737px;width:743px;height:1px;background:#dcdcdc;"></div><div class="a" style="left:281px;top:709px;width:1px;height:28px;background:#dcdcdc;"></div><div class="a" style="left:350px;top:709px;width:1px;height:28px;background:#dcdcdc;"></div><div class="a" style="left:428px;top:709px;width:1px;height:28px;background:#dcdcdc;"></div><div class="a" style="left:521px;top:709px;width:1px;height:28px;background:#dcdcdc;"></div><div class="a" style="left:619px;top:709px;width:1px;height:28px;background:#dcdcdc;"></div><div class="a" style="left:944px;top:709px;width:1px;height:28px;background:#dcdcdc;"></div><div class="a t" style="left:309.50px;top:717.10px;font-size:11px;line-height:12.29px;color:#555555;transform:scaleX(1.0626);transform-origin:0 0;">55</div><div class="a t" style="left:367.00px;top:717.10px;font-size:11px;line-height:12.29px;color:#555555;transform:scaleX(0.9318);transform-origin:0 0;">1C22THA</div><div class="a t" style="left:460.00px;top:717.10px;font-size:11px;line-height:12.29px;color:#3a8ee0;transform:scaleX(1.0136);transform-origin:0 0;text-decoration:underline;">16320</div><div class="a t" style="left:526.00px;top:717.10px;font-size:11px;line-height:12.29px;color:#555555;transform:scaleX(1.0536);transform-origin:0 0;">27/04/2022</div><div class="a t" style="left:623.00px;top:717.10px;font-size:11px;line-height:12.29px;color:#3a8ee0;transform:scaleX(0.9285);transform-origin:0 0;text-decoration:underline;">Xem</div><div class="a" style="left:688px;top:710px;width:55px;height:27px;background:#f5f5f5;border:1px solid #a8a8a8;box-sizing:border-box;border-right:2px solid #808080;border-bottom:2px solid #808080;"></div><div class="a t" style="left:692.00px;top:717.10px;font-size:11px;line-height:12.29px;color:#202020;transform:scaleX(0.9897);transform-origin:0 0;">Sao chép</div><svg class="a" style="left:884px;top:709px" width="26" height="26"><path d="M7.8,16.2L13,21.2L21.3,8.6" stroke="#2f8f28" stroke-opacity="0.55" stroke-width="3.6" stroke-linecap="round" stroke-linejoin="round" fill="none" transform="translate(0.6,0.6)"/><path d="M7.5,15.8L12.6,20.8L21,8.2" stroke="#58d444" stroke-width="3.2" stroke-linecap="round" stroke-linejoin="round" fill="none"/></svg><div class="a" style="left:985px;top:716px;width:15px;height:15px;background:#ffffff;border:1px solid #a8a8a8;box-sizing:border-box;"></div><div class="a" style="left:281px;top:765px;width:743px;height:1px;background:#dcdcdc;"></div><div class="a" style="left:281px;top:737px;width:1px;height:28px;background:#dcdcdc;"></div><div class="a" style="left:350px;top:737px;width:1px;height:28px;background:#dcdcdc;"></div><div class="a" style="left:428px;top:737px;width:1px;height:28px;background:#dcdcdc;"></div><div class="a" style="left:521px;top:737px;width:1px;height:28px;background:#dcdcdc;"></div><div class="a" style="left:619px;top:737px;width:1px;height:28px;background:#dcdcdc;"></div><div class="a" style="left:944px;top:737px;width:1px;height:28px;background:#dcdcdc;"></div><div class="a t" style="left:309.50px;top:745.26px;font-size:11px;line-height:12.29px;color:#555555;transform:scaleX(1.0626);transform-origin:0 0;">56</div><div class="a t" style="left:367.00px;top:745.26px;font-size:11px;line-height:12.29px;color:#555555;transform:scaleX(0.9318);transform-origin:0 0;">1C22THA</div><div class="a t" style="left:460.00px;top:745.26px;font-size:11px;line-height:12.29px;color:#3a8ee0;transform:scaleX(1.0136);transform-origin:0 0;text-decoration:underline;">16319</div><div class="a t" style="left:526.00px;top:745.26px;font-size:11px;line-height:12.29px;color:#555555;transform:scaleX(1.0536);transform-origin:0 0;">27/04/2022</div><div class="a t" style="left:623.00px;top:745.26px;font-size:11px;line-height:12.29px;color:#3a8ee0;transform:scaleX(0.9285);transform-origin:0 0;text-decoration:underline;">Xem</div><div class="a" style="left:688px;top:738px;width:55px;height:27px;background:#f5f5f5;border:1px solid #a8a8a8;box-sizing:border-box;border-right:2px solid #808080;border-bottom:2px solid #808080;"></div><div class="a t" style="left:692.00px;top:745.26px;font-size:11px;line-height:12.29px;color:#202020;transform:scaleX(0.9897);transform-origin:0 0;">Sao chép</div><svg class="a" style="left:884px;top:737px" width="26" height="26"><path d="M7.8,16.2L13,21.2L21.3,8.6" stroke="#2f8f28" stroke-opacity="0.55" stroke-width="3.6" stroke-linecap="round" stroke-linejoin="round" fill="none" transform="translate(0.6,0.6)"/><path d="M7.5,15.8L12.6,20.8L21,8.2" stroke="#58d444" stroke-width="3.2" stroke-linecap="round" stroke-linejoin="round" fill="none"/></svg><div class="a" style="left:985px;top:744px;width:15px;height:15px;background:#ffffff;border:1px solid #a8a8a8;box-sizing:border-box;"></div><div class="a" style="left:281px;top:793px;width:743px;height:1px;background:#dcdcdc;"></div><div class="a" style="left:281px;top:765px;width:1px;height:28px;background:#dcdcdc;"></div><div class="a" style="left:350px;top:765px;width:1px;height:28px;background:#dcdcdc;"></div><div class="a" style="left:428px;top:765px;width:1px;height:28px;background:#dcdcdc;"></div><div class="a" style="left:521px;top:765px;width:1px;height:28px;background:#dcdcdc;"></div><div class="a" style="left:619px;top:765px;width:1px;height:28px;background:#dcdcdc;"></div><div class="a" style="left:944px;top:765px;width:1px;height:28px;background:#dcdcdc;"></div><div class="a t" style="left:309.50px;top:773.44px;font-size:11px;line-height:12.29px;color:#555555;transform:scaleX(1.0626);transform-origin:0 0;">57</div><div class="a t" style="left:367.00px;top:773.44px;font-size:11px;line-height:12.29px;color:#555555;transform:scaleX(0.9318);transform-origin:0 0;">1C22THA</div><div class="a t" style="left:460.00px;top:773.44px;font-size:11px;line-height:12.29px;color:#3a8ee0;transform:scaleX(1.0136);transform-origin:0 0;text-decoration:underline;">16318</div><div class="a t" style="left:526.00px;top:773.44px;font-size:11px;line-height:12.29px;color:#555555;transform:scaleX(1.0536);transform-origin:0 0;">27/04/2022</div><div class="a t" style="left:623.00px;top:773.44px;font-size:11px;line-height:12.29px;color:#3a8ee0;transform:scaleX(0.9285);transform-origin:0 0;text-decoration:underline;">Xem</div><div class="a" style="left:688px;top:766px;width:55px;height:27px;background:#f5f5f5;border:1px solid #a8a8a8;box-sizing:border-box;border-right:2px solid #808080;border-bottom:2px solid #808080;"></div><div class="a t" style="left:692.00px;top:773.44px;font-size:11px;line-height:12.29px;color:#202020;transform:scaleX(0.9897);transform-origin:0 0;">Sao chép</div><svg class="a" style="left:884px;top:765px" width="26" height="26"><path d="M7.8,16.2L13,21.2L21.3,8.6" stroke="#2f8f28" stroke-opacity="0.55" stroke-width="3.6" stroke-linecap="round" stroke-linejoin="round" fill="none" transform="translate(0.6,0.6)"/><path d="M7.5,15.8L12.6,20.8L21,8.2" stroke="#58d444" stroke-width="3.2" stroke-linecap="round" stroke-linejoin="round" fill="none"/></svg><div class="a" style="left:985px;top:772px;width:15px;height:15px;background:#ffffff;border:1px solid #a8a8a8;box-sizing:border-box;"></div><div class="a" style="left:281px;top:793px;width:1px;height:2px;background:#dcdcdc;"></div><div class="a" style="left:350px;top:793px;width:1px;height:2px;background:#dcdcdc;"></div><div class="a" style="left:428px;top:793px;width:1px;height:2px;background:#dcdcdc;"></div><div class="a" style="left:521px;top:793px;width:1px;height:2px;background:#dcdcdc;"></div><div class="a" style="left:619px;top:793px;width:1px;height:2px;background:#dcdcdc;"></div><div class="a" style="left:944px;top:793px;width:1px;height:2px;background:#dcdcdc;"></div><div class="a" style="left:688px;top:794px;width:55px;height:1px;background:#f5f5f5;border:1px solid #a8a8a8;box-sizing:border-box;border-right:2px solid #808080;"></div><div class="a" style="left:257px;top:795px;width:767px;height:20px;background:#f0f0f0;"></div><div class="a" style="left:259px;top:797px;width:16px;height:16px;background:#ffffff;border:1px solid #b0b0b0;box-sizing:border-box;"></div><svg class="a" style="left:264px;top:801px" width="5" height="8"><path d="M4.5,0L0.5,4L4.5,8Z" fill="#707070"/></svg><div class="a" style="left:276px;top:797px;width:17px;height:16px;background:#ffffff;border:1px solid #b0b0b0;box-sizing:border-box;"></div><div class="a" style="left:1021px;top:797px;width:3px;height:16px;background:#ffffff;border:1px solid #b0b0b0;box-sizing:border-box;"></div><div class="a" style="left:257px;top:815px;width:767px;height:2px;background:#d0d0d0;"></div><div class="a" style="left:256px;top:817px;width:768px;height:25px;background:#e6e6e6;"></div><div class="a t" style="left:267.00px;top:823.14px;font-size:12px;line-height:13.40px;color:#505050;font-weight:bold;transform:scaleX(0.9599);transform-origin:0 0;">Chi tiết hóa đơn:</div><div class="a" style="left:256px;top:842px;width:768px;height:152px;background:#ffffff;"></div><div class="a" style="left:256px;top:842px;width:768px;height:22px;background:#f7f7f7;"></div><div class="a" style="left:256px;top:864px;width:768px;height:1px;background:#d0d0d0;"></div><div class="a" style="left:280px;top:842px;width:1px;height:22px;background:#d8d8d8;"></div><div class="a" style="left:350px;top:845px;width:1px;height:17px;background:#c8c8c8;"></div><div class="a t" style="left:292.99px;top:848.64px;font-size:12px;line-height:13.40px;color:#9a9a9a;transform:scaleX(0.9000);transform-origin:0 0;">Tính chất</div><div class="a" style="left:428px;top:845px;width:1px;height:17px;background:#c8c8c8;"></div><div class="a t" style="left:368.49px;top:848.64px;font-size:12px;line-height:13.40px;color:#9a9a9a;transform:scaleX(0.9000);transform-origin:0 0;">Mã hàng</div><div class="a" style="left:565px;top:845px;width:1px;height:17px;background:#c8c8c8;"></div><div class="a t" style="left:463.68px;top:848.64px;font-size:12px;line-height:13.40px;color:#9a9a9a;transform:scaleX(0.9000);transform-origin:0 0;">Tên hàng hóa</div><div class="a" style="left:606px;top:845px;width:1px;height:17px;background:#c8c8c8;"></div><div class="a t" style="left:575.20px;top:848.64px;font-size:12px;line-height:13.40px;color:#9a9a9a;transform:scaleX(0.9000);transform-origin:0 0;">ĐVT</div><div class="a" style="left:662px;top:845px;width:1px;height:17px;background:#c8c8c8;"></div><div class="a t" style="left:612.03px;top:848.64px;font-size:12px;line-height:13.40px;color:#9a9a9a;transform:scaleX(0.9000);transform-origin:0 0;">Số lượng</div><div class="a" style="left:758px;top:845px;width:1px;height:17px;background:#c8c8c8;"></div><div class="a t" style="left:691.35px;top:848.64px;font-size:12px;line-height:13.40px;color:#9a9a9a;transform:scaleX(0.9000);transform-origin:0 0;">Đơn giá</div><div class="a" style="left:859px;top:845px;width:1px;height:17px;background:#c8c8c8;"></div><div class="a t" style="left:785.18px;top:848.64px;font-size:12px;line-height:13.40px;color:#9a9a9a;transform:scaleX(0.9000);transform-origin:0 0;">Tiền hàng</div><div class="a" style="left:937px;top:845px;width:1px;height:17px;background:#c8c8c8;"></div><div class="a t" style="left:886.20px;top:848.64px;font-size:12px;line-height:13.40px;color:#9a9a9a;transform:scaleX(0.9000);transform-origin:0 0;">%CK</div><div class="a" style="left:1017px;top:845px;width:1px;height:17px;background:#c8c8c8;"></div><div class="a t" style="left:941.48px;top:848.64px;font-size:12px;line-height:13.40px;color:#9a9a9a;transform:scaleX(0.9000);transform-origin:0 0;">Thành Tiền CK</div><div class="a" style="left:350px;top:865px;width:674px;height:20px;background:#e6e6e6;"></div><div class="a" style="left:280px;top:885px;width:744px;height:1px;background:#d0d0d0;"></div><div class="a" style="left:280px;top:865px;width:1px;height:20px;background:#d0d0d0;"></div><div class="a" style="left:350px;top:865px;width:1px;height:20px;background:#d8d8d8;"></div><div class="a" style="left:428px;top:865px;width:1px;height:20px;background:#d8d8d8;"></div><div class="a" style="left:565px;top:865px;width:1px;height:20px;background:#d8d8d8;"></div><div class="a" style="left:606px;top:865px;width:1px;height:20px;background:#d8d8d8;"></div><div class="a" style="left:662px;top:865px;width:1px;height:20px;background:#d8d8d8;"></div><div class="a" style="left:758px;top:865px;width:1px;height:20px;background:#d8d8d8;"></div><div class="a" style="left:859px;top:865px;width:1px;height:20px;background:#d8d8d8;"></div><div class="a" style="left:937px;top:865px;width:1px;height:20px;background:#d8d8d8;"></div><div class="a" style="left:1017px;top:865px;width:1px;height:20px;background:#d8d8d8;"></div><svg class="a" style="left:266px;top:871px" width="5" height="8"><path d="M0,0L4.5,4L0,8Z" fill="#707070"/></svg><div class="a t" style="left:311.66px;top:869.14px;font-size:12px;line-height:13.40px;color:#555555;">1</div><div class="a t" style="left:353.00px;top:869.14px;font-size:12px;line-height:13.40px;color:#404040;transform:scaleX(0.9300);transform-origin:0 0;">MH_7</div><div class="a t" style="left:432.00px;top:869.14px;font-size:12px;line-height:13.40px;color:#404040;transform:scaleX(0.9300);transform-origin:0 0;">Cơm bò cà ry</div><div class="a t" style="left:568.00px;top:869.14px;font-size:12px;line-height:13.40px;color:#404040;transform:scaleX(0.9300);transform-origin:0 0;">Cái</div><div class="a t" style="left:610.00px;top:869.14px;font-size:12px;line-height:13.40px;color:#404040;transform:scaleX(0.9300);transform-origin:0 0;">1</div><div class="a t" style="left:666.00px;top:869.14px;font-size:12px;line-height:13.40px;color:#404040;transform:scaleX(0.9300);transform-origin:0 0;">30.000,00</div><div class="a t" style="left:762.00px;top:869.14px;font-size:12px;line-height:13.40px;color:#404040;transform:scaleX(0.9300);transform-origin:0 0;">30.000,00</div><div class="a t" style="left:862.00px;top:869.14px;font-size:12px;line-height:13.40px;color:#404040;transform:scaleX(0.9300);transform-origin:0 0;">0,00</div><div class="a t" style="left:941.00px;top:869.14px;font-size:12px;line-height:13.40px;color:#404040;transform:scaleX(0.9300);transform-origin:0 0;">0,00</div><div class="a t" style="left:1018.00px;top:869.14px;font-size:12px;line-height:13.40px;color:#404040;transform:scaleX(0.9300);transform-origin:0 0;">1</div><div class="a" style="left:256px;top:953px;width:768px;height:1px;background:#d0d0d0;"></div><div class="a" style="left:760px;top:960px;width:98px;height:24px;background:#efefef;"></div><div class="a t" style="left:802.00px;top:965.14px;font-size:12px;line-height:13.40px;color:#505050;transform:scaleX(0.9742);transform-origin:0 0;">30.000,00</div><div class="a" style="left:256px;top:993px;width:768px;height:15px;background:#efefef;"></div><div class="a" style="left:258px;top:993px;width:16px;height:15px;background:#ffffff;border:1px solid #b0b0b0;box-sizing:border-box;"></div><svg class="a" style="left:263px;top:997px" width="5" height="8"><path d="M4.5,0L0.5,4L4.5,8Z" fill="#707070"/></svg><div class="a" style="left:275px;top:993px;width:579px;height:15px;background:#ffffff;border:1px solid #a0a0a0;box-sizing:border-box;"></div><div class="a" style="left:256px;top:1008px;width:768px;height:16px;background:#f7f7f7;"></div><div class="a" style="left:256px;top:1009px;width:768px;height:1px;background:#d8d8d8;"></div><div class="a t" style="left:266.00px;top:1017.14px;font-size:12px;line-height:13.40px;color:#3a7fd0;transform:scaleX(0.9332);transform-origin:0 0;">Dữ liệu được lưu trên hệ thống TS24</div></body></html>
